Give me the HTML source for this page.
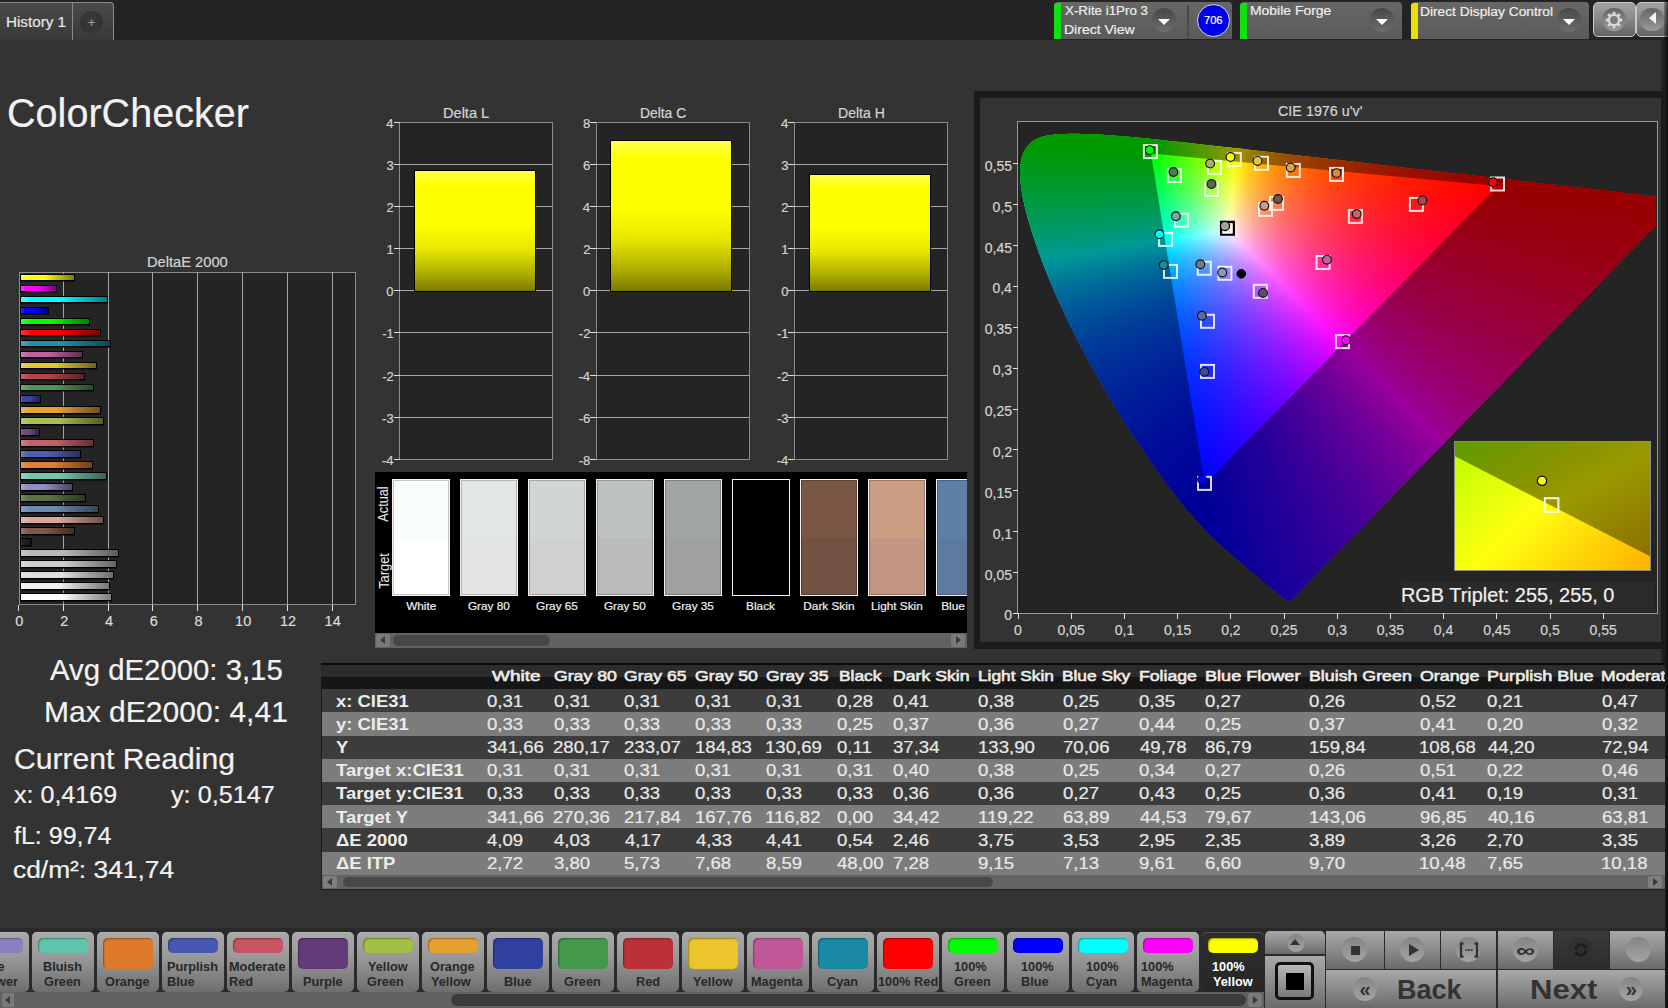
<!DOCTYPE html><html><head><meta charset="utf-8"><style>
html,body{margin:0;padding:0;}
body{width:1668px;height:1008px;overflow:hidden;background:#333333;position:relative;font-family:"Liberation Sans",sans-serif;}
.a{position:absolute;}
.t{position:absolute;white-space:nowrap;line-height:1;transform-origin:0 0;}
</style></head><body>
<div class="a" style="left:0px;top:0px;width:1668px;height:40px;background:#232323;"></div>
<div class="a" style="left:0px;top:2px;width:114px;height:38px;background:linear-gradient(#4a4a4a,#393939);border:1px solid #8a8a8a;border-bottom:none;border-left:none;border-radius:0 4px 0 0;box-sizing:border-box;"></div>
<div class="a" style="left:72px;top:3px;width:1px;height:37px;background:#8a8a8a;"></div>
<div class="t" style="left:5.75px;top:14.63px;font-size:14.5px;color:#e6e6e6;-webkit-text-stroke:0.2px currentColor;transform:scaleX(1.0485);">History 1</div>
<div class="a" style="left:80px;top:11px;width:23px;height:23px;border-radius:50%;background:radial-gradient(circle at 50% 40%,#3a3a3a,#333 60%,#454545);"></div>
<div class="t" style="left:87.71px;top:16.00px;font-size:13px;color:#9a9a9a;-webkit-text-stroke:0.2px currentColor;">+</div>
<div class="a" style="left:1054px;top:2px;width:178px;height:37px;background:linear-gradient(#676767,#5a5a5a);border-radius:4px 4px 0 0;"></div>
<div class="a" style="left:1054px;top:3px;width:7px;height:36px;background:#10e010;border-radius:3px 0 0 0;"></div>
<div class="a" style="left:1240px;top:2px;width:162px;height:37px;background:linear-gradient(#676767,#5a5a5a);border-radius:4px 4px 0 0;"></div>
<div class="a" style="left:1240px;top:3px;width:7px;height:36px;background:#10e010;border-radius:3px 0 0 0;"></div>
<div class="a" style="left:1411px;top:2px;width:178px;height:37px;background:linear-gradient(#676767,#5a5a5a);border-radius:4px 4px 0 0;"></div>
<div class="a" style="left:1411px;top:3px;width:7px;height:36px;background:#e8e000;border-radius:3px 0 0 0;"></div>
<div class="t" style="left:1064.70px;top:5.02px;font-size:12.5px;color:#eeeeee;-webkit-text-stroke:0.2px currentColor;transform:scaleX(1.0654);">X-Rite i1Pro 3</div>
<div class="t" style="left:1063.84px;top:24.22px;font-size:12.5px;color:#eeeeee;-webkit-text-stroke:0.2px currentColor;transform:scaleX(1.1210);">Direct View</div>
<div class="t" style="left:1249.85px;top:5.12px;font-size:12.5px;color:#eeeeee;-webkit-text-stroke:0.2px currentColor;transform:scaleX(1.1152);">Mobile Forge</div>
<div class="t" style="left:1420.16px;top:5.62px;font-size:12.5px;color:#eeeeee;-webkit-text-stroke:0.2px currentColor;transform:scaleX(1.1008);">Direct Display Control</div>
<div class="a" style="left:1187px;top:5px;width:2px;height:34px;background:#4a4a4a;"></div>
<div class="a" style="left:1151.7px;top:8.399999999999999px;width:24px;height:24px;border-radius:50%;background:linear-gradient(#474747,#6e6e6e);"></div>
<div class="a" style="left:1157.7px;top:18.9px;width:0;height:0;border-left:6px solid transparent;border-right:6px solid transparent;border-top:6.5px solid #fff;"></div>
<div class="a" style="left:1370.2px;top:8.3px;width:24px;height:24px;border-radius:50%;background:linear-gradient(#474747,#6e6e6e);"></div>
<div class="a" style="left:1376.2px;top:18.8px;width:0;height:0;border-left:6px solid transparent;border-right:6px solid transparent;border-top:6.5px solid #fff;"></div>
<div class="a" style="left:1556.7px;top:8.3px;width:24px;height:24px;border-radius:50%;background:linear-gradient(#474747,#6e6e6e);"></div>
<div class="a" style="left:1562.7px;top:18.8px;width:0;height:0;border-left:6px solid transparent;border-right:6px solid transparent;border-top:6.5px solid #fff;"></div>
<div class="a" style="left:1197px;top:4px;width:33px;height:33px;border-radius:50%;background:#0000e6;border:1.5px solid #ddd;box-sizing:border-box;"></div>
<div class="t" style="left:1204.19px;top:15.29px;font-size:11px;color:#ffffff;-webkit-text-stroke:0.2px currentColor;transform:scaleX(1.0101);">706</div>
<div class="a" style="left:1593px;top:2px;width:42.5px;height:35px;background:linear-gradient(#a2a2a2,#8a8a8a 45%,#626262);border:1.5px solid #c8c8c8;border-radius:5px;box-sizing:border-box;"></div>
<div class="a" style="left:1602px;top:7.5px;width:23.5px;height:23.5px;border-radius:50%;background:linear-gradient(#646464,#9a9a9a);"></div>
<svg class="a" style="left:1604px;top:9.5px" width="20" height="20" viewBox="-10 -10 20 20"><g fill="#d8d8d8"><rect x="-1.4" y="-8.3" width="2.8" height="4" rx="0.6" transform="rotate(0)"/><rect x="-1.4" y="-8.3" width="2.8" height="4" rx="0.6" transform="rotate(45)"/><rect x="-1.4" y="-8.3" width="2.8" height="4" rx="0.6" transform="rotate(90)"/><rect x="-1.4" y="-8.3" width="2.8" height="4" rx="0.6" transform="rotate(135)"/><rect x="-1.4" y="-8.3" width="2.8" height="4" rx="0.6" transform="rotate(180)"/><rect x="-1.4" y="-8.3" width="2.8" height="4" rx="0.6" transform="rotate(225)"/><rect x="-1.4" y="-8.3" width="2.8" height="4" rx="0.6" transform="rotate(270)"/><rect x="-1.4" y="-8.3" width="2.8" height="4" rx="0.6" transform="rotate(315)"/><circle r="6.2"/></g><circle r="3.9" fill="#7a7a7a"/></svg>
<div class="a" style="left:1636px;top:2px;width:40px;height:35px;background:linear-gradient(#a2a2a2,#8a8a8a 45%,#626262);border:1.5px solid #c8c8c8;border-radius:5px;box-sizing:border-box;"></div>
<div class="a" style="left:1640.4px;top:7.5px;width:23.5px;height:23.5px;border-radius:50%;background:linear-gradient(#646464,#9a9a9a);"></div>
<div class="a" style="left:1649px;top:12.2px;width:0;height:0;border-top:6.3px solid transparent;border-bottom:6.3px solid transparent;border-right:7px solid #f4f4f4;"></div>
<div class="a" style="left:1664px;top:0px;width:4px;height:40px;background:linear-gradient(90deg,rgba(0,0,0,0.2),rgba(0,0,0,0.7));"></div>
<div class="a" style="left:1661px;top:40px;width:4px;height:623px;background:linear-gradient(90deg,#2a2a2a,#1a1a1a);"></div>
<div class="t" style="left:6.62px;top:92.94px;font-size:40px;color:#f2f2f2;-webkit-text-stroke:0.2px currentColor;transform:scaleX(0.9897);">ColorChecker</div>
<div class="t" style="left:146.79px;top:254.54px;font-size:14.6px;color:#d4d4d4;-webkit-text-stroke:0.2px currentColor;transform:scaleX(1.0053);">DeltaE 2000</div>
<div class="a" style="left:18.900000000000002px;top:272px;width:337.4px;height:333px;background:#242424;border:1.5px solid #8c8c8c;box-sizing:border-box;"></div>
<div class="a" style="left:63px;top:272px;width:1px;height:333px;background:#a4a4a4;"></div>
<div class="a" style="left:108px;top:272px;width:1px;height:333px;background:#a4a4a4;"></div>
<div class="a" style="left:152px;top:272px;width:1px;height:333px;background:#a4a4a4;"></div>
<div class="a" style="left:197px;top:272px;width:1px;height:333px;background:#a4a4a4;"></div>
<div class="a" style="left:242px;top:272px;width:1px;height:333px;background:#a4a4a4;"></div>
<div class="a" style="left:287px;top:272px;width:1px;height:333px;background:#a4a4a4;"></div>
<div class="a" style="left:332px;top:272px;width:1px;height:333px;background:#a4a4a4;"></div>
<div class="a" style="left:18px;top:605px;width:1px;height:5.5px;background:#e0e0e0;"></div>
<div class="t" style="left:15.36px;top:613.73px;font-size:14.5px;color:#dcdcdc;-webkit-text-stroke:0.2px currentColor;">0</div>
<div class="a" style="left:63px;top:605px;width:1px;height:5.5px;background:#e0e0e0;"></div>
<div class="t" style="left:60.18px;top:613.73px;font-size:14.5px;color:#dcdcdc;-webkit-text-stroke:0.2px currentColor;">2</div>
<div class="a" style="left:108px;top:605px;width:1px;height:5.5px;background:#e0e0e0;"></div>
<div class="t" style="left:105.01px;top:613.73px;font-size:14.5px;color:#dcdcdc;-webkit-text-stroke:0.2px currentColor;">4</div>
<div class="a" style="left:152px;top:605px;width:1px;height:5.5px;background:#e0e0e0;"></div>
<div class="t" style="left:149.72px;top:613.73px;font-size:14.5px;color:#dcdcdc;-webkit-text-stroke:0.2px currentColor;">6</div>
<div class="a" style="left:197px;top:605px;width:1px;height:5.5px;background:#e0e0e0;"></div>
<div class="t" style="left:194.58px;top:613.73px;font-size:14.5px;color:#dcdcdc;-webkit-text-stroke:0.2px currentColor;">8</div>
<div class="a" style="left:242px;top:605px;width:1px;height:5.5px;background:#e0e0e0;"></div>
<div class="t" style="left:235.08px;top:613.73px;font-size:14.5px;color:#dcdcdc;-webkit-text-stroke:0.2px currentColor;">10</div>
<div class="a" style="left:287px;top:605px;width:1px;height:5.5px;background:#e0e0e0;"></div>
<div class="t" style="left:279.97px;top:613.73px;font-size:14.5px;color:#dcdcdc;-webkit-text-stroke:0.2px currentColor;">12</div>
<div class="a" style="left:332px;top:605px;width:1px;height:5.5px;background:#e0e0e0;"></div>
<div class="t" style="left:324.61px;top:613.73px;font-size:14.5px;color:#dcdcdc;-webkit-text-stroke:0.2px currentColor;">14</div>
<div class="a" style="left:20px;top:273.60px;width:55.08px;height:7.6px;background:linear-gradient(90deg,color-mix(in srgb,#ffff00 80%,#fff) 0%,#ffff00 12%,#ffff00 45%,color-mix(in srgb,#ffff00 50%,#000) 100%);border:1px solid #000;box-sizing:border-box;box-shadow:0 0.8px 0 rgba(0,0,0,0.55);"></div>
<div class="a" style="left:20px;top:284.63px;width:37.16px;height:7.6px;background:linear-gradient(90deg,color-mix(in srgb,#ff00ff 80%,#fff) 0%,#ff00ff 12%,#ff00ff 45%,color-mix(in srgb,#ff00ff 50%,#000) 100%);border:1px solid #000;box-sizing:border-box;box-shadow:0 0.8px 0 rgba(0,0,0,0.55);"></div>
<div class="a" style="left:20px;top:295.66px;width:88.01px;height:7.6px;background:linear-gradient(90deg,color-mix(in srgb,#00ffff 80%,#fff) 0%,#00ffff 12%,#00ffff 45%,color-mix(in srgb,#00ffff 50%,#000) 100%);border:1px solid #000;box-sizing:border-box;box-shadow:0 0.8px 0 rgba(0,0,0,0.55);"></div>
<div class="a" style="left:20px;top:306.69px;width:29.32px;height:7.6px;background:linear-gradient(90deg,color-mix(in srgb,#0000ff 80%,#fff) 0%,#0000ff 12%,#0000ff 45%,color-mix(in srgb,#0000ff 50%,#000) 100%);border:1px solid #000;box-sizing:border-box;box-shadow:0 0.8px 0 rgba(0,0,0,0.55);"></div>
<div class="a" style="left:20px;top:317.72px;width:70.31px;height:7.6px;background:linear-gradient(90deg,color-mix(in srgb,#00ff00 80%,#fff) 0%,#00ff00 12%,#00ff00 45%,color-mix(in srgb,#00ff00 50%,#000) 100%);border:1px solid #000;box-sizing:border-box;box-shadow:0 0.8px 0 rgba(0,0,0,0.55);"></div>
<div class="a" style="left:20px;top:328.75px;width:81.06px;height:7.6px;background:linear-gradient(90deg,color-mix(in srgb,#ff0000 80%,#fff) 0%,#ff0000 12%,#ff0000 45%,color-mix(in srgb,#ff0000 50%,#000) 100%);border:1px solid #000;box-sizing:border-box;box-shadow:0 0.8px 0 rgba(0,0,0,0.55);"></div>
<div class="a" style="left:20px;top:339.78px;width:91.14px;height:7.6px;background:linear-gradient(90deg,color-mix(in srgb,#1f8fae 80%,#fff) 0%,#1f8fae 12%,#1f8fae 45%,color-mix(in srgb,#1f8fae 50%,#000) 100%);border:1px solid #000;box-sizing:border-box;box-shadow:0 0.8px 0 rgba(0,0,0,0.55);"></div>
<div class="a" style="left:20px;top:350.81px;width:62.92px;height:7.6px;background:linear-gradient(90deg,color-mix(in srgb,#c060a0 80%,#fff) 0%,#c060a0 12%,#c060a0 45%,color-mix(in srgb,#c060a0 50%,#000) 100%);border:1px solid #000;box-sizing:border-box;box-shadow:0 0.8px 0 rgba(0,0,0,0.55);"></div>
<div class="a" style="left:20px;top:361.84px;width:76.81px;height:7.6px;background:linear-gradient(90deg,color-mix(in srgb,#e8c82a 80%,#fff) 0%,#e8c82a 12%,#e8c82a 45%,color-mix(in srgb,#e8c82a 50%,#000) 100%);border:1px solid #000;box-sizing:border-box;box-shadow:0 0.8px 0 rgba(0,0,0,0.55);"></div>
<div class="a" style="left:20px;top:372.87px;width:64.94px;height:7.6px;background:linear-gradient(90deg,color-mix(in srgb,#b8404a 80%,#fff) 0%,#b8404a 12%,#b8404a 45%,color-mix(in srgb,#b8404a 50%,#000) 100%);border:1px solid #000;box-sizing:border-box;box-shadow:0 0.8px 0 rgba(0,0,0,0.55);"></div>
<div class="a" style="left:20px;top:383.90px;width:74.12px;height:7.6px;background:linear-gradient(90deg,color-mix(in srgb,#4f9a50 80%,#fff) 0%,#4f9a50 12%,#4f9a50 45%,color-mix(in srgb,#4f9a50 50%,#000) 100%);border:1px solid #000;box-sizing:border-box;box-shadow:0 0.8px 0 rgba(0,0,0,0.55);"></div>
<div class="a" style="left:20px;top:394.93px;width:20.81px;height:7.6px;background:linear-gradient(90deg,color-mix(in srgb,#3a44a0 80%,#fff) 0%,#3a44a0 12%,#3a44a0 45%,color-mix(in srgb,#3a44a0 50%,#000) 100%);border:1px solid #000;box-sizing:border-box;box-shadow:0 0.8px 0 rgba(0,0,0,0.55);"></div>
<div class="a" style="left:20px;top:405.96px;width:81.06px;height:7.6px;background:linear-gradient(90deg,color-mix(in srgb,#e8a038 80%,#fff) 0%,#e8a038 12%,#e8a038 45%,color-mix(in srgb,#e8a038 50%,#000) 100%);border:1px solid #000;box-sizing:border-box;box-shadow:0 0.8px 0 rgba(0,0,0,0.55);"></div>
<div class="a" style="left:20px;top:416.99px;width:83.53px;height:7.6px;background:linear-gradient(90deg,color-mix(in srgb,#a8c050 80%,#fff) 0%,#a8c050 12%,#a8c050 45%,color-mix(in srgb,#a8c050 50%,#000) 100%);border:1px solid #000;box-sizing:border-box;box-shadow:0 0.8px 0 rgba(0,0,0,0.55);"></div>
<div class="a" style="left:20px;top:428.02px;width:19.69px;height:7.6px;background:linear-gradient(90deg,color-mix(in srgb,#6a4a80 80%,#fff) 0%,#6a4a80 12%,#6a4a80 45%,color-mix(in srgb,#6a4a80 50%,#000) 100%);border:1px solid #000;box-sizing:border-box;box-shadow:0 0.8px 0 rgba(0,0,0,0.55);"></div>
<div class="a" style="left:20px;top:439.05px;width:73.90px;height:7.6px;background:linear-gradient(90deg,color-mix(in srgb,#c8606a 80%,#fff) 0%,#c8606a 12%,#c8606a 45%,color-mix(in srgb,#c8606a 50%,#000) 100%);border:1px solid #000;box-sizing:border-box;box-shadow:0 0.8px 0 rgba(0,0,0,0.55);"></div>
<div class="a" style="left:20px;top:450.08px;width:60.68px;height:7.6px;background:linear-gradient(90deg,color-mix(in srgb,#5060b0 80%,#fff) 0%,#5060b0 12%,#5060b0 45%,color-mix(in srgb,#5060b0 50%,#000) 100%);border:1px solid #000;box-sizing:border-box;box-shadow:0 0.8px 0 rgba(0,0,0,0.55);"></div>
<div class="a" style="left:20px;top:461.11px;width:73.22px;height:7.6px;background:linear-gradient(90deg,color-mix(in srgb,#e08030 80%,#fff) 0%,#e08030 12%,#e08030 45%,color-mix(in srgb,#e08030 50%,#000) 100%);border:1px solid #000;box-sizing:border-box;box-shadow:0 0.8px 0 rgba(0,0,0,0.55);"></div>
<div class="a" style="left:20px;top:472.14px;width:87.34px;height:7.6px;background:linear-gradient(90deg,color-mix(in srgb,#70c8b0 80%,#fff) 0%,#70c8b0 12%,#70c8b0 45%,color-mix(in srgb,#70c8b0 50%,#000) 100%);border:1px solid #000;box-sizing:border-box;box-shadow:0 0.8px 0 rgba(0,0,0,0.55);"></div>
<div class="a" style="left:20px;top:483.17px;width:52.84px;height:7.6px;background:linear-gradient(90deg,color-mix(in srgb,#9090c0 80%,#fff) 0%,#9090c0 12%,#9090c0 45%,color-mix(in srgb,#9090c0 50%,#000) 100%);border:1px solid #000;box-sizing:border-box;box-shadow:0 0.8px 0 rgba(0,0,0,0.55);"></div>
<div class="a" style="left:20px;top:494.20px;width:66.28px;height:7.6px;background:linear-gradient(90deg,color-mix(in srgb,#5a7048 80%,#fff) 0%,#5a7048 12%,#5a7048 45%,color-mix(in srgb,#5a7048 50%,#000) 100%);border:1px solid #000;box-sizing:border-box;box-shadow:0 0.8px 0 rgba(0,0,0,0.55);"></div>
<div class="a" style="left:20px;top:505.23px;width:79.27px;height:7.6px;background:linear-gradient(90deg,color-mix(in srgb,#6a88b0 80%,#fff) 0%,#6a88b0 12%,#6a88b0 45%,color-mix(in srgb,#6a88b0 50%,#000) 100%);border:1px solid #000;box-sizing:border-box;box-shadow:0 0.8px 0 rgba(0,0,0,0.55);"></div>
<div class="a" style="left:20px;top:516.26px;width:84.20px;height:7.6px;background:linear-gradient(90deg,color-mix(in srgb,#d8a898 80%,#fff) 0%,#d8a898 12%,#d8a898 45%,color-mix(in srgb,#d8a898 50%,#000) 100%);border:1px solid #000;box-sizing:border-box;box-shadow:0 0.8px 0 rgba(0,0,0,0.55);"></div>
<div class="a" style="left:20px;top:527.29px;width:55.30px;height:7.6px;background:linear-gradient(90deg,color-mix(in srgb,#805848 80%,#fff) 0%,#805848 12%,#805848 45%,color-mix(in srgb,#805848 50%,#000) 100%);border:1px solid #000;box-sizing:border-box;box-shadow:0 0.8px 0 rgba(0,0,0,0.55);"></div>
<div class="a" style="left:20px;top:538.32px;width:12.30px;height:7.6px;background:linear-gradient(90deg,color-mix(in srgb,#202020 80%,#fff) 0%,#202020 12%,#202020 45%,color-mix(in srgb,#202020 50%,#000) 100%);border:1px solid #000;box-sizing:border-box;box-shadow:0 0.8px 0 rgba(0,0,0,0.55);"></div>
<div class="a" style="left:20px;top:549.35px;width:98.98px;height:7.6px;background:linear-gradient(90deg,color-mix(in srgb,#b8b8b8 80%,#fff) 0%,#b8b8b8 12%,#b8b8b8 45%,color-mix(in srgb,#b8b8b8 50%,#000) 100%);border:1px solid #000;box-sizing:border-box;box-shadow:0 0.8px 0 rgba(0,0,0,0.55);"></div>
<div class="a" style="left:20px;top:560.38px;width:97.19px;height:7.6px;background:linear-gradient(90deg,color-mix(in srgb,#cccccc 80%,#fff) 0%,#cccccc 12%,#cccccc 45%,color-mix(in srgb,#cccccc 50%,#000) 100%);border:1px solid #000;box-sizing:border-box;box-shadow:0 0.8px 0 rgba(0,0,0,0.55);"></div>
<div class="a" style="left:20px;top:571.41px;width:93.61px;height:7.6px;background:linear-gradient(90deg,color-mix(in srgb,#dddddd 80%,#fff) 0%,#dddddd 12%,#dddddd 45%,color-mix(in srgb,#dddddd 50%,#000) 100%);border:1px solid #000;box-sizing:border-box;box-shadow:0 0.8px 0 rgba(0,0,0,0.55);"></div>
<div class="a" style="left:20px;top:582.44px;width:90.47px;height:7.6px;background:linear-gradient(90deg,color-mix(in srgb,#eeeeee 80%,#fff) 0%,#eeeeee 12%,#eeeeee 45%,color-mix(in srgb,#eeeeee 50%,#000) 100%);border:1px solid #000;box-sizing:border-box;box-shadow:0 0.8px 0 rgba(0,0,0,0.55);"></div>
<div class="a" style="left:20px;top:593.47px;width:91.82px;height:7.6px;background:linear-gradient(90deg,color-mix(in srgb,#ffffff 80%,#fff) 0%,#ffffff 12%,#ffffff 45%,color-mix(in srgb,#ffffff 50%,#000) 100%);border:1px solid #000;box-sizing:border-box;box-shadow:0 0.8px 0 rgba(0,0,0,0.55);"></div>
<div class="a" style="left:398.90000000000003px;top:121.6px;width:154.00000000000003px;height:338.4px;background:#242424;border:1.5px solid #8c8c8c;box-sizing:border-box;"></div>
<div class="t" style="left:443.25px;top:105.93px;font-size:14.5px;color:#d4d4d4;-webkit-text-stroke:0.2px currentColor;transform:scaleX(1.0054);">Delta L</div>
<div class="a" style="left:393.6px;top:122px;width:6px;height:1px;background:#e0e0e0;"></div>
<div class="t" style="left:386.24px;top:116.80px;font-size:13px;color:#d4d4d4;-webkit-text-stroke:0.2px currentColor;">4</div>
<div class="a" style="left:399.6px;top:164px;width:152.60000000000002px;height:1px;background:#a8a8a8;"></div>
<div class="a" style="left:393.6px;top:164px;width:6px;height:1px;background:#e0e0e0;"></div>
<div class="t" style="left:386.44px;top:158.92px;font-size:13px;color:#d4d4d4;-webkit-text-stroke:0.2px currentColor;">3</div>
<div class="a" style="left:399.6px;top:206px;width:152.60000000000002px;height:1px;background:#a8a8a8;"></div>
<div class="a" style="left:393.6px;top:206px;width:6px;height:1px;background:#e0e0e0;"></div>
<div class="t" style="left:386.54px;top:201.05px;font-size:13px;color:#d4d4d4;-webkit-text-stroke:0.2px currentColor;">2</div>
<div class="a" style="left:399.6px;top:248px;width:152.60000000000002px;height:1px;background:#a8a8a8;"></div>
<div class="a" style="left:393.6px;top:248px;width:6px;height:1px;background:#e0e0e0;"></div>
<div class="t" style="left:386.50px;top:243.17px;font-size:13px;color:#d4d4d4;-webkit-text-stroke:0.2px currentColor;">1</div>
<div class="a" style="left:399.6px;top:290px;width:152.60000000000002px;height:1px;background:#a8a8a8;"></div>
<div class="a" style="left:393.6px;top:290px;width:6px;height:1px;background:#e0e0e0;"></div>
<div class="t" style="left:386.37px;top:285.30px;font-size:13px;color:#d4d4d4;-webkit-text-stroke:0.2px currentColor;">0</div>
<div class="a" style="left:399.6px;top:332px;width:152.60000000000002px;height:1px;background:#a8a8a8;"></div>
<div class="a" style="left:393.6px;top:332px;width:6px;height:1px;background:#e0e0e0;"></div>
<div class="t" style="left:382.18px;top:327.42px;font-size:13px;color:#d4d4d4;-webkit-text-stroke:0.2px currentColor;">-1</div>
<div class="a" style="left:399.6px;top:375px;width:152.60000000000002px;height:1px;background:#a8a8a8;"></div>
<div class="a" style="left:393.6px;top:375px;width:6px;height:1px;background:#e0e0e0;"></div>
<div class="t" style="left:382.21px;top:369.55px;font-size:13px;color:#d4d4d4;-webkit-text-stroke:0.2px currentColor;">-2</div>
<div class="a" style="left:399.6px;top:417px;width:152.60000000000002px;height:1px;background:#a8a8a8;"></div>
<div class="a" style="left:393.6px;top:417px;width:6px;height:1px;background:#e0e0e0;"></div>
<div class="t" style="left:382.12px;top:411.67px;font-size:13px;color:#d4d4d4;-webkit-text-stroke:0.2px currentColor;">-3</div>
<div class="a" style="left:393.6px;top:459px;width:6px;height:1px;background:#e0e0e0;"></div>
<div class="t" style="left:381.92px;top:453.80px;font-size:13px;color:#d4d4d4;-webkit-text-stroke:0.2px currentColor;">-4</div>
<div class="a" style="left:413.80px;top:169.90px;width:121.90px;height:121.90px;background:linear-gradient(#ffff50 0%,#ffff00 12%,#ffff00 45%,#e8e800 65%,#b0b000 85%,#7a7a00 100%);border:1px solid #000;box-sizing:border-box;"></div>
<div class="a" style="left:595.5px;top:121.6px;width:154.09999999999994px;height:338.4px;background:#242424;border:1.5px solid #8c8c8c;box-sizing:border-box;"></div>
<div class="t" style="left:639.96px;top:105.93px;font-size:14.5px;color:#d4d4d4;-webkit-text-stroke:0.2px currentColor;transform:scaleX(0.9546);">Delta C</div>
<div class="a" style="left:590.2px;top:122px;width:6px;height:1px;background:#e0e0e0;"></div>
<div class="t" style="left:583.04px;top:116.80px;font-size:13px;color:#d4d4d4;-webkit-text-stroke:0.2px currentColor;">8</div>
<div class="a" style="left:596.2px;top:164px;width:152.69999999999993px;height:1px;background:#a8a8a8;"></div>
<div class="a" style="left:590.2px;top:164px;width:6px;height:1px;background:#e0e0e0;"></div>
<div class="t" style="left:583.04px;top:158.92px;font-size:13px;color:#d4d4d4;-webkit-text-stroke:0.2px currentColor;">6</div>
<div class="a" style="left:596.2px;top:206px;width:152.69999999999993px;height:1px;background:#a8a8a8;"></div>
<div class="a" style="left:590.2px;top:206px;width:6px;height:1px;background:#e0e0e0;"></div>
<div class="t" style="left:582.84px;top:201.05px;font-size:13px;color:#d4d4d4;-webkit-text-stroke:0.2px currentColor;">4</div>
<div class="a" style="left:596.2px;top:248px;width:152.69999999999993px;height:1px;background:#a8a8a8;"></div>
<div class="a" style="left:590.2px;top:248px;width:6px;height:1px;background:#e0e0e0;"></div>
<div class="t" style="left:583.14px;top:243.17px;font-size:13px;color:#d4d4d4;-webkit-text-stroke:0.2px currentColor;">2</div>
<div class="a" style="left:596.2px;top:290px;width:152.69999999999993px;height:1px;background:#a8a8a8;"></div>
<div class="a" style="left:590.2px;top:290px;width:6px;height:1px;background:#e0e0e0;"></div>
<div class="t" style="left:582.97px;top:285.30px;font-size:13px;color:#d4d4d4;-webkit-text-stroke:0.2px currentColor;">0</div>
<div class="a" style="left:596.2px;top:332px;width:152.69999999999993px;height:1px;background:#a8a8a8;"></div>
<div class="a" style="left:590.2px;top:332px;width:6px;height:1px;background:#e0e0e0;"></div>
<div class="t" style="left:578.81px;top:327.42px;font-size:13px;color:#d4d4d4;-webkit-text-stroke:0.2px currentColor;">-2</div>
<div class="a" style="left:596.2px;top:375px;width:152.69999999999993px;height:1px;background:#a8a8a8;"></div>
<div class="a" style="left:590.2px;top:375px;width:6px;height:1px;background:#e0e0e0;"></div>
<div class="t" style="left:578.52px;top:369.55px;font-size:13px;color:#d4d4d4;-webkit-text-stroke:0.2px currentColor;">-4</div>
<div class="a" style="left:596.2px;top:417px;width:152.69999999999993px;height:1px;background:#a8a8a8;"></div>
<div class="a" style="left:590.2px;top:417px;width:6px;height:1px;background:#e0e0e0;"></div>
<div class="t" style="left:578.72px;top:411.67px;font-size:13px;color:#d4d4d4;-webkit-text-stroke:0.2px currentColor;">-6</div>
<div class="a" style="left:590.2px;top:459px;width:6px;height:1px;background:#e0e0e0;"></div>
<div class="t" style="left:578.72px;top:453.80px;font-size:13px;color:#d4d4d4;-webkit-text-stroke:0.2px currentColor;">-8</div>
<div class="a" style="left:610.40px;top:139.78px;width:122.00px;height:152.02px;background:linear-gradient(#ffff50 0%,#ffff00 12%,#ffff00 45%,#e8e800 65%,#b0b000 85%,#7a7a00 100%);border:1px solid #000;box-sizing:border-box;"></div>
<div class="a" style="left:793.6999999999999px;top:121.6px;width:154.50000000000003px;height:338.4px;background:#242424;border:1.5px solid #8c8c8c;box-sizing:border-box;"></div>
<div class="t" style="left:838.34px;top:105.93px;font-size:14.5px;color:#d4d4d4;-webkit-text-stroke:0.2px currentColor;transform:scaleX(0.9681);">Delta H</div>
<div class="a" style="left:788.4px;top:122px;width:6px;height:1px;background:#e0e0e0;"></div>
<div class="t" style="left:781.04px;top:116.80px;font-size:13px;color:#d4d4d4;-webkit-text-stroke:0.2px currentColor;">4</div>
<div class="a" style="left:794.4px;top:164px;width:153.10000000000002px;height:1px;background:#a8a8a8;"></div>
<div class="a" style="left:788.4px;top:164px;width:6px;height:1px;background:#e0e0e0;"></div>
<div class="t" style="left:781.24px;top:158.92px;font-size:13px;color:#d4d4d4;-webkit-text-stroke:0.2px currentColor;">3</div>
<div class="a" style="left:794.4px;top:206px;width:153.10000000000002px;height:1px;background:#a8a8a8;"></div>
<div class="a" style="left:788.4px;top:206px;width:6px;height:1px;background:#e0e0e0;"></div>
<div class="t" style="left:781.34px;top:201.05px;font-size:13px;color:#d4d4d4;-webkit-text-stroke:0.2px currentColor;">2</div>
<div class="a" style="left:794.4px;top:248px;width:153.10000000000002px;height:1px;background:#a8a8a8;"></div>
<div class="a" style="left:788.4px;top:248px;width:6px;height:1px;background:#e0e0e0;"></div>
<div class="t" style="left:781.30px;top:243.17px;font-size:13px;color:#d4d4d4;-webkit-text-stroke:0.2px currentColor;">1</div>
<div class="a" style="left:794.4px;top:290px;width:153.10000000000002px;height:1px;background:#a8a8a8;"></div>
<div class="a" style="left:788.4px;top:290px;width:6px;height:1px;background:#e0e0e0;"></div>
<div class="t" style="left:781.17px;top:285.30px;font-size:13px;color:#d4d4d4;-webkit-text-stroke:0.2px currentColor;">0</div>
<div class="a" style="left:794.4px;top:332px;width:153.10000000000002px;height:1px;background:#a8a8a8;"></div>
<div class="a" style="left:788.4px;top:332px;width:6px;height:1px;background:#e0e0e0;"></div>
<div class="t" style="left:776.98px;top:327.42px;font-size:13px;color:#d4d4d4;-webkit-text-stroke:0.2px currentColor;">-1</div>
<div class="a" style="left:794.4px;top:375px;width:153.10000000000002px;height:1px;background:#a8a8a8;"></div>
<div class="a" style="left:788.4px;top:375px;width:6px;height:1px;background:#e0e0e0;"></div>
<div class="t" style="left:777.01px;top:369.55px;font-size:13px;color:#d4d4d4;-webkit-text-stroke:0.2px currentColor;">-2</div>
<div class="a" style="left:794.4px;top:417px;width:153.10000000000002px;height:1px;background:#a8a8a8;"></div>
<div class="a" style="left:788.4px;top:417px;width:6px;height:1px;background:#e0e0e0;"></div>
<div class="t" style="left:776.91px;top:411.67px;font-size:13px;color:#d4d4d4;-webkit-text-stroke:0.2px currentColor;">-3</div>
<div class="a" style="left:788.4px;top:459px;width:6px;height:1px;background:#e0e0e0;"></div>
<div class="t" style="left:776.72px;top:453.80px;font-size:13px;color:#d4d4d4;-webkit-text-stroke:0.2px currentColor;">-4</div>
<div class="a" style="left:808.60px;top:173.69px;width:122.40px;height:118.11px;background:linear-gradient(#ffff50 0%,#ffff00 12%,#ffff00 45%,#e8e800 65%,#b0b000 85%,#7a7a00 100%);border:1px solid #000;box-sizing:border-box;"></div>
<div class="a" style="left:375px;top:472px;width:592px;height:161px;background:#000;"></div>
<div class="t" style="left:363.94px;top:497.19px;width:38.91px;height:14px;font-size:14px;color:#ececec;transform-origin:50% 50%;transform:rotate(-90deg) scaleX(0.9093);">Actual</div>
<div class="t" style="left:364.74px;top:563.70px;width:38.91px;height:14px;font-size:14px;color:#ececec;transform-origin:50% 50%;transform:rotate(-90deg) scaleX(0.9169);">Target</div>
<div class="a" style="left:392px;top:479px;width:58px;height:117px;overflow:hidden;"><div style="position:absolute;left:0;top:0;width:58px;height:117px;border:1px solid #f2f2f2;box-shadow:inset 0 0 0 1px rgba(0,0,0,0.22);box-sizing:border-box;background:linear-gradient(#f9fdf9 0,#f9fdf9 50%,#ffffff 50%,#ffffff 100%);"></div></div>
<div class="a" style="left:0;top:0;width:967px;height:1008px;overflow:hidden;"><div class="t" style="left:406.15px;top:600.61px;font-size:11.8px;color:#f0f0f0;-webkit-text-stroke:0.2px currentColor;">White</div></div>
<div class="a" style="left:460px;top:479px;width:58px;height:117px;overflow:hidden;"><div style="position:absolute;left:0;top:0;width:58px;height:117px;border:1px solid #f2f2f2;box-shadow:inset 0 0 0 1px rgba(0,0,0,0.22);box-sizing:border-box;background:linear-gradient(#e3e7e4 0,#e3e7e4 50%,#e4e4e4 50%,#e4e4e4 100%);"></div></div>
<div class="a" style="left:0;top:0;width:967px;height:1008px;overflow:hidden;"><div class="t" style="left:467.95px;top:600.61px;font-size:11.8px;color:#f0f0f0;-webkit-text-stroke:0.2px currentColor;">Gray 80</div></div>
<div class="a" style="left:528px;top:479px;width:58px;height:117px;overflow:hidden;"><div style="position:absolute;left:0;top:0;width:58px;height:117px;border:1px solid #f2f2f2;box-shadow:inset 0 0 0 1px rgba(0,0,0,0.22);box-sizing:border-box;background:linear-gradient(#d0d6d1 0,#d0d6d1 50%,#d1d1d1 50%,#d1d1d1 100%);"></div></div>
<div class="a" style="left:0;top:0;width:967px;height:1008px;overflow:hidden;"><div class="t" style="left:535.97px;top:600.61px;font-size:11.8px;color:#f0f0f0;-webkit-text-stroke:0.2px currentColor;">Gray 65</div></div>
<div class="a" style="left:596px;top:479px;width:58px;height:117px;overflow:hidden;"><div style="position:absolute;left:0;top:0;width:58px;height:117px;border:1px solid #f2f2f2;box-shadow:inset 0 0 0 1px rgba(0,0,0,0.22);box-sizing:border-box;background:linear-gradient(#bdc3be 0,#bdc3be 50%,#bcbcbc 50%,#bcbcbc 100%);"></div></div>
<div class="a" style="left:0;top:0;width:967px;height:1008px;overflow:hidden;"><div class="t" style="left:603.95px;top:600.61px;font-size:11.8px;color:#f0f0f0;-webkit-text-stroke:0.2px currentColor;">Gray 50</div></div>
<div class="a" style="left:664px;top:479px;width:58px;height:117px;overflow:hidden;"><div style="position:absolute;left:0;top:0;width:58px;height:117px;border:1px solid #f2f2f2;box-shadow:inset 0 0 0 1px rgba(0,0,0,0.22);box-sizing:border-box;background:linear-gradient(#a0a5a1 0,#a0a5a1 50%,#a0a0a0 50%,#a0a0a0 100%);"></div></div>
<div class="a" style="left:0;top:0;width:967px;height:1008px;overflow:hidden;"><div class="t" style="left:671.97px;top:600.61px;font-size:11.8px;color:#f0f0f0;-webkit-text-stroke:0.2px currentColor;">Gray 35</div></div>
<div class="a" style="left:732px;top:479px;width:58px;height:117px;overflow:hidden;"><div style="position:absolute;left:0;top:0;width:58px;height:117px;border:1px solid #f2f2f2;box-shadow:inset 0 0 0 1px rgba(0,0,0,0.22);box-sizing:border-box;background:linear-gradient(#000000 0,#000000 50%,#000000 50%,#000000 100%);"></div></div>
<div class="a" style="left:0;top:0;width:967px;height:1008px;overflow:hidden;"><div class="t" style="left:746.09px;top:600.61px;font-size:11.8px;color:#f0f0f0;-webkit-text-stroke:0.2px currentColor;">Black</div></div>
<div class="a" style="left:800px;top:479px;width:58px;height:117px;overflow:hidden;"><div style="position:absolute;left:0;top:0;width:58px;height:117px;border:1px solid #f2f2f2;box-shadow:inset 0 0 0 1px rgba(0,0,0,0.22);box-sizing:border-box;background:linear-gradient(#7a5644 0,#7a5644 50%,#735244 50%,#735244 100%);"></div></div>
<div class="a" style="left:0;top:0;width:967px;height:1008px;overflow:hidden;"><div class="t" style="left:803.32px;top:600.61px;font-size:11.8px;color:#f0f0f0;-webkit-text-stroke:0.2px currentColor;">Dark Skin</div></div>
<div class="a" style="left:868px;top:479px;width:58px;height:117px;overflow:hidden;"><div style="position:absolute;left:0;top:0;width:58px;height:117px;border:1px solid #f2f2f2;box-shadow:inset 0 0 0 1px rgba(0,0,0,0.22);box-sizing:border-box;background:linear-gradient(#cb9d82 0,#cb9d82 50%,#c29682 50%,#c29682 100%);"></div></div>
<div class="a" style="left:0;top:0;width:967px;height:1008px;overflow:hidden;"><div class="t" style="left:870.98px;top:600.61px;font-size:11.8px;color:#f0f0f0;-webkit-text-stroke:0.2px currentColor;">Light Skin</div></div>
<div class="a" style="left:936px;top:479px;width:31px;height:117px;overflow:hidden;"><div style="position:absolute;left:0;top:0;width:58px;height:117px;border:1px solid #f2f2f2;box-shadow:inset 0 0 0 1px rgba(0,0,0,0.22);box-sizing:border-box;background:linear-gradient(#5f80a6 0,#5f80a6 50%,#5e7a9e 50%,#5e7a9e 100%);"></div></div>
<div class="a" style="left:0;top:0;width:967px;height:1008px;overflow:hidden;"><div class="t" style="left:941.24px;top:600.61px;font-size:11.8px;color:#f0f0f0;-webkit-text-stroke:0.2px currentColor;">Blue Sky</div></div>
<div class="a" style="left:375px;top:633px;width:592px;height:15px;background:#626262;"></div>
<div class="a" style="left:376px;top:634px;width:14px;height:13px;background:#7a7a7a;border-radius:2px;"></div>
<div class="a" style="left:380px;top:636px;width:0;height:0;border-top:4.5px solid transparent;border-bottom:4.5px solid transparent;border-right:5px solid #3a3a3a;"></div>
<div class="a" style="left:393px;top:635px;width:157px;height:11px;background:#474747;border-radius:6px;"></div>
<div class="a" style="left:951px;top:634px;width:14px;height:13px;background:#7a7a7a;border-radius:2px;"></div>
<div class="a" style="left:956px;top:636px;width:0;height:0;border-top:4.5px solid transparent;border-bottom:4.5px solid transparent;border-left:5px solid #3a3a3a;"></div>
<div class="a" style="left:974px;top:91px;width:690px;height:558px;background:#1b1b1b;"></div>
<div class="a" style="left:980px;top:98px;width:681px;height:544px;background:#333333;"></div>
<div class="t" style="left:1277.78px;top:104.15px;font-size:14px;color:#d4d4d4;-webkit-text-stroke:0.2px currentColor;transform:scaleX(1.0248);">CIE 1976 u'v'</div>
<div class="a" style="left:1017px;top:121px;width:641px;height:493px;background:#242424;border:1.5px solid #9a9a9a;box-sizing:border-box;"></div>
<div class="a" style="left:1018.5px;top:122.5px;width:637.5px;height:490.0px;overflow:hidden;"><div class="a" style="left:0;top:0;width:637.5px;height:490.0px;clip-path:polygon(272.7px 477.4px,272.6px 477.5px,272.5px 477.6px,272.1px 477.8px,272.0px 477.8px,271.7px 477.8px,271.3px 477.9px,270.9px 477.9px,270.4px 477.8px,269.8px 477.7px,269.1px 477.5px,268.4px 477.2px,267.6px 476.8px,266.8px 476.3px,265.8px 475.7px,264.7px 475.0px,263.6px 474.1px,262.3px 473.1px,260.8px 472.0px,259.2px 470.7px,257.5px 469.2px,255.5px 467.6px,253.4px 465.9px,251.0px 463.9px,248.5px 461.9px,245.8px 459.6px,242.8px 457.2px,239.6px 454.5px,236.0px 451.5px,232.1px 448.3px,228.0px 444.7px,223.5px 441.0px,219.0px 437.0px,214.3px 433.0px,209.7px 429.0px,205.3px 424.9px,200.9px 421.0px,196.8px 417.2px,193.0px 413.5px,189.2px 409.7px,185.6px 406.0px,182.0px 402.1px,178.3px 398.0px,174.5px 393.7px,170.4px 389.0px,166.2px 383.9px,161.7px 378.4px,157.1px 372.6px,152.3px 366.4px,147.4px 360.0px,142.4px 353.2px,137.3px 346.1px,132.0px 338.6px,126.7px 330.9px,121.3px 322.8px,115.7px 314.4px,110.2px 305.8px,104.6px 297.0px,99.0px 287.9px,93.3px 278.6px,87.7px 269.2px,82.1px 259.6px,76.6px 249.9px,71.2px 240.2px,65.9px 230.5px,60.7px 220.8px,55.7px 211.0px,50.9px 201.4px,46.3px 191.8px,42.0px 182.4px,37.8px 173.2px,33.9px 164.2px,30.2px 155.3px,26.8px 146.7px,23.5px 138.3px,20.5px 130.3px,17.8px 122.6px,15.3px 115.2px,13.0px 108.1px,10.9px 101.3px,9.1px 94.9px,7.4px 88.8px,6.0px 83.1px,4.8px 77.7px,3.8px 72.5px,3.0px 67.7px,2.4px 63.2px,1.9px 58.9px,1.6px 54.9px,1.5px 51.1px,1.5px 47.6px,1.7px 44.3px,2.1px 41.2px,2.6px 38.2px,3.2px 35.5px,4.0px 32.9px,4.9px 30.6px,5.9px 28.4px,7.1px 26.3px,8.4px 24.5px,9.8px 22.7px,11.3px 21.2px,12.9px 19.8px,14.6px 18.5px,16.4px 17.4px,18.2px 16.4px,20.2px 15.5px,22.2px 14.8px,24.3px 14.1px,26.4px 13.6px,28.6px 13.1px,30.9px 12.7px,33.2px 12.4px,35.5px 12.1px,37.9px 11.9px,40.3px 11.7px,42.8px 11.6px,45.3px 11.5px,47.7px 11.4px,50.2px 11.3px,52.8px 11.3px,55.3px 11.3px,57.8px 11.3px,60.3px 11.3px,62.9px 11.4px,65.4px 11.4px,68.0px 11.5px,70.6px 11.6px,73.2px 11.7px,75.8px 11.8px,78.5px 11.9px,81.2px 12.1px,83.9px 12.2px,86.7px 12.4px,89.5px 12.6px,92.3px 12.8px,95.2px 13.0px,98.1px 13.2px,101.0px 13.5px,104.0px 13.7px,107.0px 14.0px,110.1px 14.3px,113.2px 14.5px,116.4px 14.8px,119.6px 15.1px,122.8px 15.5px,126.2px 15.8px,129.5px 16.1px,133.0px 16.5px,136.5px 16.8px,140.0px 17.2px,143.6px 17.6px,147.3px 18.0px,151.0px 18.4px,154.8px 18.8px,158.7px 19.2px,162.6px 19.6px,166.6px 20.1px,170.7px 20.5px,174.8px 21.0px,179.0px 21.4px,183.3px 21.9px,187.6px 22.4px,192.1px 22.9px,196.6px 23.4px,201.1px 23.9px,205.8px 24.4px,210.5px 25.0px,215.3px 25.5px,220.2px 26.1px,225.1px 26.6px,230.2px 27.2px,235.3px 27.8px,240.5px 28.4px,245.7px 29.0px,251.1px 29.6px,256.5px 30.2px,262.0px 30.9px,267.5px 31.5px,273.2px 32.2px,278.9px 32.8px,284.7px 33.5px,290.5px 34.2px,296.4px 34.8px,302.4px 35.5px,308.5px 36.2px,314.6px 36.9px,320.8px 37.6px,327.0px 38.3px,333.3px 39.1px,339.6px 39.8px,346.0px 40.5px,352.4px 41.2px,358.8px 42.0px,365.2px 42.7px,371.7px 43.5px,378.1px 44.2px,384.5px 45.0px,391.0px 45.7px,397.3px 46.4px,403.7px 47.2px,410.0px 47.9px,416.3px 48.6px,422.5px 49.3px,428.8px 50.0px,435.0px 50.7px,441.1px 51.5px,447.2px 52.1px,453.1px 52.8px,458.9px 53.5px,464.6px 54.1px,470.2px 54.8px,475.9px 55.4px,481.8px 56.1px,488.1px 56.8px,494.8px 57.6px,501.9px 58.4px,509.5px 59.3px,517.6px 60.2px,525.8px 61.2px,534.2px 62.1px,542.6px 63.1px,550.7px 64.0px,558.5px 64.9px,565.9px 65.8px,572.7px 66.6px,579.1px 67.3px,585.1px 68.0px,590.8px 68.6px,596.1px 69.2px,601.2px 69.8px,606.1px 70.4px,610.6px 70.9px,614.9px 71.4px,618.9px 71.9px,622.7px 72.3px,626.2px 72.7px,629.4px 73.1px,632.4px 73.4px,635.1px 73.7px,637.6px 74.0px,640.0px 74.3px,642.1px 74.5px,644.1px 74.7px,646.0px 75.0px,647.8px 75.2px,649.6px 75.4px,651.2px 75.6px,652.9px 75.7px,654.4px 75.9px,655.8px 76.1px,657.2px 76.2px,658.4px 76.4px,659.4px 76.5px,660.3px 76.6px,660.8px 76.7px,662.0px 76.8px,662.5px 76.9px,662.8px 76.9px);isolation:isolate;"><div class="a" style="left:0;top:0;width:700px;height:500px;background:conic-gradient(from 5.4deg at 210.0px 108.1px,#ffff00 0deg,#ff0000 75.2deg,#ff00ff 129.4deg,#0000ff 180.0deg,#00ffff 255.2deg,#00ff00 309.5deg,#ffff00 360deg);"></div><div class="a" style="left:0;top:0;width:637.5px;height:490.0px;background:conic-gradient(from 4.00deg at 186.18px 361.89px,rgb(0,255,0) 0deg,rgb(0,255,0) 1deg,rgb(0,241,0) 2deg,rgb(0,222,0) 3deg,rgb(0,204,0) 4deg,rgb(0,189,0) 5deg,rgb(0,175,0) 6deg,rgb(0,162,0) 7deg,rgb(0,151,0) 8deg,rgb(0,141,0) 9deg,rgb(0,131,0) 10deg,rgb(0,122,0) 11deg,rgb(0,114,0) 12deg,rgb(0,106,0) 13deg,rgb(0,99,0) 14deg,rgb(0,93,0) 15deg,rgb(0,86,0) 16deg,rgb(0,81,0) 17deg,rgb(0,75,0) 18deg,rgb(0,70,0) 19deg,rgb(0,65,0) 20deg,rgb(0,60,0) 21deg,rgb(0,56,0) 22deg,rgb(0,52,0) 23deg,rgb(0,48,0) 24deg,rgb(0,44,0) 25deg,rgb(0,40,0) 26deg,rgb(0,37,0) 27deg,rgb(0,33,0) 28deg,rgb(0,30,0) 29deg,rgb(0,27,0) 30deg,rgb(0,24,0) 31deg,rgb(0,21,0) 32deg,rgb(0,18,0) 33deg,rgb(0,16,0) 34deg,rgb(0,13,0) 35deg,rgb(0,10,0) 36deg,rgb(0,8,0) 37deg,rgb(0,6,0) 38deg,rgb(0,3,0) 39deg,rgb(0,1,0) 40deg,rgb(0,0,0) 41deg,rgb(0,0,0) 42deg,rgb(0,0,0) 43deg,rgb(0,0,0) 44deg,rgb(0,0,0) 45deg,rgb(0,0,0) 46deg,rgb(0,0,0) 47deg,rgb(0,0,0) 48deg,rgb(0,0,0) 49deg,rgb(0,0,0) 50deg,rgb(0,0,0) 51deg,rgb(0,0,0) 52deg,rgb(0,0,0) 53deg,rgb(0,0,0) 54deg,rgb(0,0,0) 55deg,rgb(0,0,0) 56deg,rgb(0,0,0) 57deg,rgb(0,0,0) 58deg,rgb(0,0,0) 59deg,rgb(0,0,0) 60deg,rgb(0,0,0) 61deg,rgb(0,0,0) 62deg,rgb(0,0,0) 63deg,rgb(0,0,0) 64deg,rgb(0,0,0) 65deg,rgb(0,0,0) 66deg,rgb(0,0,0) 67deg,rgb(0,0,0) 68deg,rgb(0,0,0) 69deg,rgb(0,0,0) 70deg,rgb(0,0,0) 71deg,rgb(0,0,0) 72deg,rgb(0,0,0) 73deg,rgb(0,0,0) 74deg,rgb(0,0,0) 75deg,rgb(0,0,0) 76deg,rgb(0,0,0) 77deg,rgb(0,0,0) 78deg,rgb(0,0,0) 79deg,rgb(0,0,0) 80deg,rgb(0,0,0) 81deg,rgb(0,0,0) 82deg,rgb(0,0,0) 83deg,rgb(0,0,0) 84deg,rgb(0,0,0) 85deg,rgb(0,0,0) 86deg,rgb(0,0,0) 87deg,rgb(0,0,0) 88deg,rgb(0,0,0) 89deg,rgb(0,0,0) 90deg,rgb(0,0,0) 91deg,rgb(0,0,0) 92deg,rgb(0,0,0) 93deg,rgb(0,0,0) 94deg,rgb(0,0,0) 95deg,rgb(0,0,0) 96deg,rgb(0,0,0) 97deg,rgb(0,0,0) 98deg,rgb(0,0,0) 99deg,rgb(0,0,0) 100deg,rgb(0,0,0) 101deg,rgb(0,0,0) 102deg,rgb(0,0,0) 103deg,rgb(0,0,0) 104deg,rgb(0,0,0) 105deg,rgb(0,0,0) 105.01deg),conic-gradient(from 68.00deg at 132.50px 31.10px,rgb(0,0,0) 0deg,rgb(0,0,0) 1deg,rgb(0,0,0) 2deg,rgb(0,0,0) 3deg,rgb(0,0,0) 4deg,rgb(0,0,0) 5deg,rgb(0,0,0) 6deg,rgb(0,0,0) 7deg,rgb(0,0,0) 8deg,rgb(0,0,0) 9deg,rgb(0,0,0) 10deg,rgb(0,0,0) 11deg,rgb(0,0,0) 12deg,rgb(0,0,0) 13deg,rgb(0,0,0) 14deg,rgb(0,0,0) 15deg,rgb(0,0,0) 16deg,rgb(0,0,0) 17deg,rgb(0,0,0) 18deg,rgb(0,0,0) 19deg,rgb(0,0,0) 20deg,rgb(0,0,0) 21deg,rgb(0,0,0) 22deg,rgb(0,0,0) 23deg,rgb(0,0,0) 24deg,rgb(0,0,0) 25deg,rgb(0,0,0) 26deg,rgb(0,0,0) 27deg,rgb(0,0,3) 28deg,rgb(0,0,7) 29deg,rgb(0,0,11) 30deg,rgb(0,0,16) 31deg,rgb(0,0,20) 32deg,rgb(0,0,25) 33deg,rgb(0,0,29) 34deg,rgb(0,0,34) 35deg,rgb(0,0,39) 36deg,rgb(0,0,43) 37deg,rgb(0,0,48) 38deg,rgb(0,0,53) 39deg,rgb(0,0,58) 40deg,rgb(0,0,63) 41deg,rgb(0,0,68) 42deg,rgb(0,0,74) 43deg,rgb(0,0,79) 44deg,rgb(0,0,84) 45deg,rgb(0,0,90) 46deg,rgb(0,0,96) 47deg,rgb(0,0,102) 48deg,rgb(0,0,108) 49deg,rgb(0,0,114) 50deg,rgb(0,0,120) 51deg,rgb(0,0,127) 52deg,rgb(0,0,134) 53deg,rgb(0,0,141) 54deg,rgb(0,0,148) 55deg,rgb(0,0,155) 56deg,rgb(0,0,163) 57deg,rgb(0,0,171) 58deg,rgb(0,0,179) 59deg,rgb(0,0,187) 60deg,rgb(0,0,196) 61deg,rgb(0,0,205) 62deg,rgb(0,0,215) 63deg,rgb(0,0,225) 64deg,rgb(0,0,235) 65deg,rgb(0,0,246) 66deg,rgb(0,0,255) 67deg,rgb(0,0,255) 68deg,rgb(0,0,255) 69deg,rgb(0,0,0) 69.01deg),#ff0000;background-blend-mode:screen;clip-path:polygon(210.0px 108.1px,219.7px -2.0px,639.5px -2.0px,639.5px 492.0px,591.7px 492.0px);"></div><div class="a" style="left:0;top:0;width:637.5px;height:490.0px;background:conic-gradient(from 318.00deg at 186.18px 361.89px,rgb(0,0,0) 0deg,rgb(0,0,0) 1deg,rgb(0,0,0) 2deg,rgb(0,0,0) 3deg,rgb(0,0,0) 4deg,rgb(0,0,0) 5deg,rgb(0,0,0) 6deg,rgb(0,0,0) 7deg,rgb(0,0,0) 8deg,rgb(0,0,0) 9deg,rgb(0,0,0) 10deg,rgb(0,0,0) 11deg,rgb(0,0,0) 12deg,rgb(0,0,0) 13deg,rgb(0,0,0) 14deg,rgb(0,0,0) 15deg,rgb(0,0,0) 16deg,rgb(0,0,0) 17deg,rgb(0,0,0) 18deg,rgb(0,0,0) 19deg,rgb(0,0,0) 20deg,rgb(0,0,0) 21deg,rgb(0,0,0) 22deg,rgb(0,0,0) 23deg,rgb(0,0,0) 24deg,rgb(0,0,0) 25deg,rgb(0,0,0) 26deg,rgb(0,0,0) 27deg,rgb(0,0,0) 28deg,rgb(0,0,0) 29deg,rgb(0,0,0) 30deg,rgb(0,0,0) 31deg,rgb(0,0,0) 32deg,rgb(3,0,0) 33deg,rgb(17,0,0) 34deg,rgb(32,0,0) 35deg,rgb(46,0,0) 36deg,rgb(62,0,0) 37deg,rgb(78,0,0) 38deg,rgb(94,0,0) 39deg,rgb(111,0,0) 40deg,rgb(128,0,0) 41deg,rgb(146,0,0) 42deg,rgb(165,0,0) 43deg,rgb(184,0,0) 44deg,rgb(204,0,0) 45deg,rgb(225,0,0) 46deg,rgb(247,0,0) 47deg,rgb(255,0,0) 48deg,rgb(255,0,0) 49deg,rgb(0,0,0) 49.01deg),conic-gradient(from 259.00deg at 479.17px 63.49px,rgb(0,0,255) 0deg,rgb(0,0,255) 1deg,rgb(0,0,246) 2deg,rgb(0,0,224) 3deg,rgb(0,0,203) 4deg,rgb(0,0,182) 5deg,rgb(0,0,163) 6deg,rgb(0,0,144) 7deg,rgb(0,0,127) 8deg,rgb(0,0,109) 9deg,rgb(0,0,93) 10deg,rgb(0,0,77) 11deg,rgb(0,0,62) 12deg,rgb(0,0,47) 13deg,rgb(0,0,32) 14deg,rgb(0,0,18) 15deg,rgb(0,0,5) 16deg,rgb(0,0,0) 17deg,rgb(0,0,0) 18deg,rgb(0,0,0) 19deg,rgb(0,0,0) 20deg,rgb(0,0,0) 21deg,rgb(0,0,0) 22deg,rgb(0,0,0) 23deg,rgb(0,0,0) 24deg,rgb(0,0,0) 25deg,rgb(0,0,0) 26deg,rgb(0,0,0) 27deg,rgb(0,0,0) 27.01deg),#00ff00;background-blend-mode:screen;clip-path:polygon(210.0px 108.1px,-2.0px 144.6px,-2.0px -2.0px,221.0px -2.0px);"></div><div class="a" style="left:0;top:0;width:637.5px;height:490.0px;background:conic-gradient(from 133.00deg at 132.50px 31.10px,rgb(255,0,0) 0deg,rgb(255,0,0) 1deg,rgb(253,0,0) 2deg,rgb(242,0,0) 3deg,rgb(231,0,0) 4deg,rgb(221,0,0) 5deg,rgb(211,0,0) 6deg,rgb(201,0,0) 7deg,rgb(192,0,0) 8deg,rgb(183,0,0) 9deg,rgb(174,0,0) 10deg,rgb(166,0,0) 11deg,rgb(158,0,0) 12deg,rgb(150,0,0) 13deg,rgb(142,0,0) 14deg,rgb(134,0,0) 15deg,rgb(127,0,0) 16deg,rgb(120,0,0) 17deg,rgb(113,0,0) 18deg,rgb(106,0,0) 19deg,rgb(100,0,0) 20deg,rgb(93,0,0) 21deg,rgb(87,0,0) 22deg,rgb(81,0,0) 23deg,rgb(75,0,0) 24deg,rgb(69,0,0) 25deg,rgb(63,0,0) 26deg,rgb(57,0,0) 27deg,rgb(51,0,0) 28deg,rgb(46,0,0) 29deg,rgb(40,0,0) 30deg,rgb(35,0,0) 31deg,rgb(30,0,0) 32deg,rgb(24,0,0) 33deg,rgb(19,0,0) 34deg,rgb(14,0,0) 35deg,rgb(9,0,0) 36deg,rgb(4,0,0) 37deg,rgb(0,0,0) 38deg,rgb(0,0,0) 39deg,rgb(0,0,0) 40deg,rgb(0,0,0) 41deg,rgb(0,0,0) 42deg,rgb(0,0,0) 43deg,rgb(0,0,0) 44deg,rgb(0,0,0) 45deg,rgb(0,0,0) 46deg,rgb(0,0,0) 47deg,rgb(0,0,0) 48deg,rgb(0,0,0) 49deg,rgb(0,0,0) 50deg,rgb(0,0,0) 51deg,rgb(0,0,0) 52deg,rgb(0,0,0) 53deg,rgb(0,0,0) 54deg,rgb(0,0,0) 55deg,rgb(0,0,0) 56deg,rgb(0,0,0) 57deg,rgb(0,0,0) 58deg,rgb(0,0,0) 59deg,rgb(0,0,0) 60deg,rgb(0,0,0) 61deg,rgb(0,0,0) 62deg,rgb(0,0,0) 63deg,rgb(0,0,0) 64deg,rgb(0,0,0) 65deg,rgb(0,0,0) 66deg,rgb(0,0,0) 67deg,rgb(0,0,0) 68deg,rgb(0,0,0) 69deg,rgb(0,0,0) 70deg,rgb(0,0,0) 71deg,rgb(0,0,0) 72deg,rgb(0,0,0) 73deg,rgb(0,0,0) 74deg,rgb(0,0,0) 75deg,rgb(0,0,0) 76deg,rgb(0,0,0) 77deg,rgb(0,0,0) 78deg,rgb(0,0,0) 79deg,rgb(0,0,0) 80deg,rgb(0,0,0) 81deg,rgb(0,0,0) 82deg,rgb(0,0,0) 83deg,rgb(0,0,0) 84deg,rgb(0,0,0) 85deg,rgb(0,0,0) 86deg,rgb(0,0,0) 87deg,rgb(0,0,0) 88deg,rgb(0,0,0) 89deg,rgb(0,0,0) 90deg,rgb(0,0,0) 91deg,rgb(0,0,0) 92deg,rgb(0,0,0) 93deg,rgb(0,0,0) 94deg,rgb(0,0,0) 95deg,rgb(0,0,0) 96deg,rgb(0,0,0) 97deg,rgb(0,0,0) 98deg,rgb(0,0,0) 99deg,rgb(0,0,0) 99.01deg),conic-gradient(from 163.00deg at 479.17px 63.49px,rgb(0,0,0) 0deg,rgb(0,0,0) 1deg,rgb(0,0,0) 2deg,rgb(0,0,0) 3deg,rgb(0,0,0) 4deg,rgb(0,0,0) 5deg,rgb(0,0,0) 6deg,rgb(0,0,0) 7deg,rgb(0,0,0) 8deg,rgb(0,0,0) 9deg,rgb(0,0,0) 10deg,rgb(0,0,0) 11deg,rgb(0,0,0) 12deg,rgb(0,0,0) 13deg,rgb(0,0,0) 14deg,rgb(0,0,0) 15deg,rgb(0,0,0) 16deg,rgb(0,0,0) 17deg,rgb(0,0,0) 18deg,rgb(0,0,0) 19deg,rgb(0,0,0) 20deg,rgb(0,0,0) 21deg,rgb(0,0,0) 22deg,rgb(0,0,0) 23deg,rgb(0,0,0) 24deg,rgb(0,0,0) 25deg,rgb(0,0,0) 26deg,rgb(0,0,0) 27deg,rgb(0,0,0) 28deg,rgb(0,0,0) 29deg,rgb(0,0,0) 30deg,rgb(0,0,0) 31deg,rgb(0,0,0) 32deg,rgb(0,0,0) 33deg,rgb(0,0,0) 34deg,rgb(0,0,0) 35deg,rgb(0,0,0) 36deg,rgb(0,0,0) 37deg,rgb(0,0,0) 38deg,rgb(0,0,0) 39deg,rgb(0,0,0) 40deg,rgb(0,0,0) 41deg,rgb(0,0,0) 42deg,rgb(0,0,0) 43deg,rgb(0,0,0) 44deg,rgb(0,0,0) 45deg,rgb(0,0,0) 46deg,rgb(0,0,0) 47deg,rgb(0,0,0) 48deg,rgb(0,0,0) 49deg,rgb(0,0,0) 50deg,rgb(0,0,0) 51deg,rgb(0,0,0) 52deg,rgb(0,0,0) 53deg,rgb(0,0,0) 54deg,rgb(0,0,0) 55deg,rgb(0,0,0) 56deg,rgb(0,0,0) 57deg,rgb(0,0,0) 58deg,rgb(0,0,0) 59deg,rgb(0,0,0) 60deg,rgb(0,0,0) 61deg,rgb(0,1,0) 62deg,rgb(0,4,0) 63deg,rgb(0,6,0) 64deg,rgb(0,9,0) 65deg,rgb(0,12,0) 66deg,rgb(0,15,0) 67deg,rgb(0,18,0) 68deg,rgb(0,21,0) 69deg,rgb(0,24,0) 70deg,rgb(0,28,0) 71deg,rgb(0,31,0) 72deg,rgb(0,35,0) 73deg,rgb(0,39,0) 74deg,rgb(0,42,0) 75deg,rgb(0,47,0) 76deg,rgb(0,51,0) 77deg,rgb(0,56,0) 78deg,rgb(0,60,0) 79deg,rgb(0,65,0) 80deg,rgb(0,71,0) 81deg,rgb(0,76,0) 82deg,rgb(0,82,0) 83deg,rgb(0,89,0) 84deg,rgb(0,96,0) 85deg,rgb(0,103,0) 86deg,rgb(0,111,0) 87deg,rgb(0,119,0) 88deg,rgb(0,128,0) 89deg,rgb(0,138,0) 90deg,rgb(0,149,0) 91deg,rgb(0,161,0) 92deg,rgb(0,174,0) 93deg,rgb(0,188,0) 94deg,rgb(0,204,0) 95deg,rgb(0,222,0) 96deg,rgb(0,242,0) 97deg,rgb(0,255,0) 98deg,rgb(0,255,0) 99deg,rgb(0,0,0) 99.01deg),#0000ff;background-blend-mode:screen;clip-path:polygon(210.0px 108.1px,601.2px 492.0px,-2.0px 492.0px,-2.0px 141.9px);"></div></div></div>
<svg class="a" style="left:0;top:0" width="1668" height="1008"><defs><clipPath id="plotclip"><rect x="1018.5" y="122.5" width="637.5" height="490.0"/></clipPath></defs><g clip-path="url(#plotclip)"><path d="M1291.2,599.9 L1291.1,600.0 L1291.0,600.1 L1290.6,600.3 L1290.5,600.3 L1290.2,600.3 L1289.8,600.4 L1289.4,600.4 L1288.9,600.3 L1288.3,600.2 L1287.6,600.0 L1286.9,599.7 L1286.1,599.3 L1285.3,598.8 L1284.3,598.2 L1283.2,597.5 L1282.1,596.6 L1280.8,595.6 L1279.3,594.5 L1277.7,593.2 L1276.0,591.7 L1274.0,590.1 L1271.9,588.4 L1269.5,586.4 L1267.0,584.4 L1264.3,582.1 L1261.3,579.7 L1258.1,577.0 L1254.5,574.0 L1250.6,570.8 L1246.5,567.2 L1242.0,563.5 L1237.5,559.5 L1232.8,555.5 L1228.2,551.5 L1223.8,547.4 L1219.4,543.5 L1215.3,539.7 L1211.5,536.0 L1207.7,532.2 L1204.1,528.5 L1200.5,524.6 L1196.8,520.5 L1193.0,516.2 L1188.9,511.5 L1184.7,506.4 L1180.2,500.9 L1175.6,495.1 L1170.8,488.9 L1165.9,482.5 L1160.9,475.7 L1155.8,468.6 L1150.5,461.1 L1145.2,453.4 L1139.8,445.3 L1134.2,436.9 L1128.7,428.3 L1123.1,419.5 L1117.5,410.4 L1111.8,401.1 L1106.2,391.7 L1100.6,382.1 L1095.1,372.4 L1089.7,362.7 L1084.4,353.0 L1079.2,343.3 L1074.2,333.5 L1069.4,323.9 L1064.8,314.3 L1060.5,304.9 L1056.3,295.7 L1052.4,286.7 L1048.7,277.8 L1045.3,269.2 L1042.0,260.8 L1039.0,252.8 L1036.3,245.1 L1033.8,237.7 L1031.5,230.6 L1029.4,223.8 L1027.6,217.4 L1025.9,211.3 L1024.5,205.6 L1023.3,200.2 L1022.3,195.0 L1021.5,190.2 L1020.9,185.7 L1020.4,181.4 L1020.1,177.4 L1020.0,173.6 L1020.0,170.1 L1020.2,166.8 L1020.6,163.7 L1021.1,160.7 L1021.7,158.0 L1022.5,155.4 L1023.4,153.1 L1024.4,150.9 L1025.6,148.8 L1026.9,147.0 L1028.3,145.2 L1029.8,143.7 L1031.4,142.3 L1033.1,141.0 L1034.9,139.9 L1036.7,138.9 L1038.7,138.0 L1040.7,137.3 L1042.8,136.6 L1044.9,136.1 L1047.1,135.6 L1049.4,135.2 L1051.7,134.9 L1054.0,134.6 L1056.4,134.4 L1058.8,134.2 L1061.3,134.1 L1063.8,134.0 L1066.2,133.9 L1068.7,133.8 L1071.3,133.8 L1073.8,133.8 L1076.3,133.8 L1078.8,133.8 L1081.4,133.9 L1083.9,133.9 L1086.5,134.0 L1089.1,134.1 L1091.7,134.2 L1094.3,134.3 L1097.0,134.4 L1099.7,134.6 L1102.4,134.7 L1105.2,134.9 L1108.0,135.1 L1110.8,135.3 L1113.7,135.5 L1116.6,135.7 L1119.5,136.0 L1122.5,136.2 L1125.5,136.5 L1128.6,136.8 L1131.7,137.0 L1134.9,137.3 L1138.1,137.6 L1141.3,138.0 L1144.7,138.3 L1148.0,138.6 L1151.5,139.0 L1155.0,139.3 L1158.5,139.7 L1162.1,140.1 L1165.8,140.5 L1169.5,140.9 L1173.3,141.3 L1177.2,141.7 L1181.1,142.1 L1185.1,142.6 L1189.2,143.0 L1193.3,143.5 L1197.5,143.9 L1201.8,144.4 L1206.1,144.9 L1210.6,145.4 L1215.1,145.9 L1219.6,146.4 L1224.3,146.9 L1229.0,147.5 L1233.8,148.0 L1238.7,148.6 L1243.6,149.1 L1248.7,149.7 L1253.8,150.3 L1259.0,150.9 L1264.2,151.5 L1269.6,152.1 L1275.0,152.7 L1280.5,153.4 L1286.0,154.0 L1291.7,154.7 L1297.4,155.3 L1303.2,156.0 L1309.0,156.7 L1314.9,157.3 L1320.9,158.0 L1327.0,158.7 L1333.1,159.4 L1339.3,160.1 L1345.5,160.8 L1351.8,161.6 L1358.1,162.3 L1364.5,163.0 L1370.9,163.7 L1377.3,164.5 L1383.7,165.2 L1390.2,166.0 L1396.6,166.7 L1403.0,167.5 L1409.5,168.2 L1415.8,168.9 L1422.2,169.7 L1428.5,170.4 L1434.8,171.1 L1441.0,171.8 L1447.3,172.5 L1453.5,173.2 L1459.6,174.0 L1465.7,174.6 L1471.6,175.3 L1477.4,176.0 L1483.1,176.6 L1488.7,177.3 L1494.4,177.9 L1500.3,178.6 L1506.6,179.3 L1513.3,180.1 L1520.4,180.9 L1528.0,181.8 L1536.1,182.7 L1544.3,183.7 L1552.7,184.6 L1561.1,185.6 L1569.2,186.5 L1577.0,187.4 L1584.4,188.3 L1591.2,189.1 L1597.6,189.8 L1603.6,190.5 L1609.3,191.1 L1614.6,191.7 L1619.7,192.3 L1624.6,192.9 L1629.1,193.4 L1633.4,193.9 L1637.4,194.4 L1641.2,194.8 L1644.7,195.2 L1647.9,195.6 L1650.9,195.9 L1653.6,196.2 L1656.1,196.5 L1658.5,196.8 L1660.6,197.0 L1662.6,197.2 L1664.5,197.5 L1666.3,197.7 L1668.1,197.9 L1669.7,198.1 L1671.4,198.2 L1672.9,198.4 L1674.3,198.6 L1675.7,198.7 L1676.9,198.9 L1677.9,199.0 L1678.8,199.1 L1679.3,199.2 L1680.5,199.3 L1681.0,199.4 L1681.3,199.4 Z M1497.7,186.0 L1151.0,153.6 L1204.7,484.4 Z" fill="#000" fill-opacity="0.4" fill-rule="evenodd"/></g><rect x="1143.9" y="145.1" width="13" height="13" fill="none" stroke="#fff" stroke-opacity="0.85" stroke-width="2"/><rect x="1167.9" y="169.1" width="13" height="13" fill="none" stroke="#fff" stroke-opacity="0.85" stroke-width="2"/><rect x="1208.0" y="160.9" width="13" height="13" fill="none" stroke="#fff" stroke-opacity="0.85" stroke-width="2"/><rect x="1227.8" y="152.9" width="13" height="13" fill="none" stroke="#fff" stroke-opacity="0.85" stroke-width="2"/><rect x="1255.0" y="156.8" width="13" height="13" fill="none" stroke="#fff" stroke-opacity="0.85" stroke-width="2"/><rect x="1286.8" y="163.9" width="13" height="13" fill="none" stroke="#fff" stroke-opacity="0.85" stroke-width="2"/><rect x="1205.0" y="182.9" width="13" height="13" fill="none" stroke="#fff" stroke-opacity="0.85" stroke-width="2"/><rect x="1270.0" y="196.9" width="13" height="13" fill="none" stroke="#fff" stroke-opacity="0.85" stroke-width="2"/><rect x="1259.0" y="202.9" width="13" height="13" fill="none" stroke="#fff" stroke-opacity="0.85" stroke-width="2"/><rect x="1175.1" y="213.7" width="13" height="13" fill="none" stroke="#fff" stroke-opacity="0.85" stroke-width="2"/><rect x="1159.1" y="232.9" width="13" height="13" fill="none" stroke="#fff" stroke-opacity="0.85" stroke-width="2"/><rect x="1330.0" y="167.9" width="13" height="13" fill="none" stroke="#fff" stroke-opacity="0.85" stroke-width="2"/><rect x="1491.0" y="177.5" width="13" height="13" fill="none" stroke="#fff" stroke-opacity="0.85" stroke-width="2"/><rect x="1409.9" y="197.9" width="13" height="13" fill="none" stroke="#fff" stroke-opacity="0.85" stroke-width="2"/><rect x="1348.9" y="209.9" width="13" height="13" fill="none" stroke="#fff" stroke-opacity="0.85" stroke-width="2"/><rect x="1316.6" y="256.0" width="13" height="13" fill="none" stroke="#fff" stroke-opacity="0.85" stroke-width="2"/><rect x="1164.0" y="264.9" width="13" height="13" fill="none" stroke="#fff" stroke-opacity="0.85" stroke-width="2"/><rect x="1197.8" y="261.8" width="13" height="13" fill="none" stroke="#fff" stroke-opacity="0.85" stroke-width="2"/><rect x="1218.4" y="266.8" width="13" height="13" fill="none" stroke="#fff" stroke-opacity="0.85" stroke-width="2"/><rect x="1253.8" y="284.8" width="13" height="13" fill="none" stroke="#fff" stroke-opacity="0.85" stroke-width="2"/><rect x="1201.0" y="314.8" width="13" height="13" fill="none" stroke="#fff" stroke-opacity="0.85" stroke-width="2"/><rect x="1335.9" y="335.1" width="13" height="13" fill="none" stroke="#fff" stroke-opacity="0.85" stroke-width="2"/><rect x="1201.0" y="364.9" width="13" height="13" fill="none" stroke="#fff" stroke-opacity="0.85" stroke-width="2"/><rect x="1198.0" y="476.9" width="13" height="13" fill="none" stroke="#fff" stroke-opacity="0.85" stroke-width="2"/><circle cx="1149.8" cy="150.1" r="4.4" fill="#00ff00" stroke="#111" stroke-width="1.15"/><circle cx="1173.4" cy="172" r="4.4" fill="#4a7d4c" stroke="#111" stroke-width="1.15"/><circle cx="1210.1" cy="163.6" r="4.4" fill="#a9b064" stroke="#111" stroke-width="1.15"/><circle cx="1230.5" cy="157" r="4.4" fill="#ffff00" stroke="#111" stroke-width="1.15"/><circle cx="1257.5" cy="160.9" r="4.4" fill="#e2c244" stroke="#111" stroke-width="1.15"/><circle cx="1290.7" cy="167.5" r="4.4" fill="#dca446" stroke="#111" stroke-width="1.15"/><circle cx="1211.5" cy="184" r="4.4" fill="#596a4d" stroke="#111" stroke-width="1.15"/><circle cx="1278" cy="199" r="4.4" fill="#6e544a" stroke="#111" stroke-width="1.15"/><circle cx="1264.3" cy="205.8" r="4.4" fill="#c49c8a" stroke="#111" stroke-width="1.15"/><circle cx="1175.9" cy="216.3" r="4.4" fill="#74aaa2" stroke="#111" stroke-width="1.15"/><circle cx="1159.4" cy="234.3" r="4.4" fill="#00ffff" stroke="#111" stroke-width="1.15"/><circle cx="1336.5" cy="173.1" r="4.4" fill="#d68a3a" stroke="#111" stroke-width="1.15"/><circle cx="1493" cy="182.3" r="4.4" fill="#ff0000" stroke="#111" stroke-width="1.15"/><circle cx="1422.4" cy="200.4" r="4.4" fill="#b9404e" stroke="#111" stroke-width="1.15"/><circle cx="1356.7" cy="214" r="4.4" fill="#c46474" stroke="#111" stroke-width="1.15"/><circle cx="1327" cy="259.8" r="4.4" fill="#bb64a0" stroke="#111" stroke-width="1.15"/><circle cx="1163.8" cy="265.1" r="4.4" fill="#1f8a94" stroke="#111" stroke-width="1.15"/><circle cx="1200.3" cy="264.3" r="4.4" fill="#6a7c94" stroke="#111" stroke-width="1.15"/><circle cx="1222.2" cy="272.5" r="4.4" fill="#9294b4" stroke="#111" stroke-width="1.15"/><circle cx="1263" cy="292.9" r="4.4" fill="#624a72" stroke="#111" stroke-width="1.15"/><circle cx="1201.9" cy="315.7" r="4.4" fill="#5a6aa4" stroke="#111" stroke-width="1.15"/><circle cx="1345.9" cy="340.3" r="4.4" fill="#ff00ff" stroke="#111" stroke-width="1.15"/><circle cx="1204.3" cy="371.7" r="4.4" fill="#424a94" stroke="#111" stroke-width="1.15"/><circle cx="1202.1" cy="479.6" r="4.4" fill="#0000ff" stroke="#111" stroke-width="1.15"/><rect x="1221.2" y="222" width="12.5" height="12.5" fill="#fff" fill-opacity="0.0" stroke="#000" stroke-width="2.5"/><rect x="1223" y="224" width="9" height="9" fill="none" stroke="#fff" stroke-width="1.3"/><circle cx="1225" cy="225.9" r="4.6" fill="#a2a2a2" stroke="#000" stroke-width="1.3"/><circle cx="1241.3" cy="273.8" r="4.3" fill="#000" stroke="#000" stroke-width="1"/></svg>
<div class="a" style="left:1012.5px;top:613px;width:5px;height:1px;background:#e0e0e0;"></div>
<div class="t" style="left:1004.26px;top:608.45px;font-size:14px;color:#d4d4d4;-webkit-text-stroke:0.2px currentColor;">0</div>
<div class="a" style="left:1012.5px;top:572px;width:5px;height:1px;background:#e0e0e0;"></div>
<div class="t" style="left:984.83px;top:567.57px;font-size:14px;color:#d4d4d4;-webkit-text-stroke:0.2px currentColor;">0,05</div>
<div class="a" style="left:1012.5px;top:531px;width:5px;height:1px;background:#e0e0e0;"></div>
<div class="t" style="left:992.71px;top:526.69px;font-size:14px;color:#d4d4d4;-webkit-text-stroke:0.2px currentColor;">0,1</div>
<div class="a" style="left:1012.5px;top:490px;width:5px;height:1px;background:#e0e0e0;"></div>
<div class="t" style="left:984.83px;top:485.81px;font-size:14px;color:#d4d4d4;-webkit-text-stroke:0.2px currentColor;">0,15</div>
<div class="a" style="left:1012.5px;top:449px;width:5px;height:1px;background:#e0e0e0;"></div>
<div class="t" style="left:992.74px;top:444.93px;font-size:14px;color:#d4d4d4;-webkit-text-stroke:0.2px currentColor;">0,2</div>
<div class="a" style="left:1012.5px;top:409px;width:5px;height:1px;background:#e0e0e0;"></div>
<div class="t" style="left:984.83px;top:404.05px;font-size:14px;color:#d4d4d4;-webkit-text-stroke:0.2px currentColor;">0,25</div>
<div class="a" style="left:1012.5px;top:368px;width:5px;height:1px;background:#e0e0e0;"></div>
<div class="t" style="left:992.64px;top:363.17px;font-size:14px;color:#d4d4d4;-webkit-text-stroke:0.2px currentColor;">0,3</div>
<div class="a" style="left:1012.5px;top:327px;width:5px;height:1px;background:#e0e0e0;"></div>
<div class="t" style="left:984.83px;top:322.29px;font-size:14px;color:#d4d4d4;-webkit-text-stroke:0.2px currentColor;">0,35</div>
<div class="a" style="left:1012.5px;top:286px;width:5px;height:1px;background:#e0e0e0;"></div>
<div class="t" style="left:992.43px;top:281.41px;font-size:14px;color:#d4d4d4;-webkit-text-stroke:0.2px currentColor;">0,4</div>
<div class="a" style="left:1012.5px;top:245px;width:5px;height:1px;background:#e0e0e0;"></div>
<div class="t" style="left:984.83px;top:240.53px;font-size:14px;color:#d4d4d4;-webkit-text-stroke:0.2px currentColor;">0,45</div>
<div class="a" style="left:1012.5px;top:204px;width:5px;height:1px;background:#e0e0e0;"></div>
<div class="t" style="left:992.60px;top:199.65px;font-size:14px;color:#d4d4d4;-webkit-text-stroke:0.2px currentColor;">0,5</div>
<div class="a" style="left:1012.5px;top:163px;width:5px;height:1px;background:#e0e0e0;"></div>
<div class="t" style="left:984.83px;top:158.77px;font-size:14px;color:#d4d4d4;-webkit-text-stroke:0.2px currentColor;">0,55</div>
<div class="a" style="left:1018px;top:613px;width:1px;height:6px;background:#e0e0e0;"></div>
<div class="t" style="left:1014.10px;top:623.15px;font-size:14px;color:#d4d4d4;-webkit-text-stroke:0.2px currentColor;">0</div>
<div class="a" style="left:1071px;top:613px;width:1px;height:6px;background:#e0e0e0;"></div>
<div class="t" style="left:1057.59px;top:623.15px;font-size:14px;color:#d4d4d4;-webkit-text-stroke:0.2px currentColor;">0,05</div>
<div class="a" style="left:1124px;top:613px;width:1px;height:6px;background:#e0e0e0;"></div>
<div class="t" style="left:1114.72px;top:623.15px;font-size:14px;color:#d4d4d4;-webkit-text-stroke:0.2px currentColor;">0,1</div>
<div class="a" style="left:1177px;top:613px;width:1px;height:6px;background:#e0e0e0;"></div>
<div class="t" style="left:1163.98px;top:623.15px;font-size:14px;color:#d4d4d4;-webkit-text-stroke:0.2px currentColor;">0,15</div>
<div class="a" style="left:1230px;top:613px;width:1px;height:6px;background:#e0e0e0;"></div>
<div class="t" style="left:1221.14px;top:623.15px;font-size:14px;color:#d4d4d4;-webkit-text-stroke:0.2px currentColor;">0,2</div>
<div class="a" style="left:1284px;top:613px;width:1px;height:6px;background:#e0e0e0;"></div>
<div class="t" style="left:1270.38px;top:623.15px;font-size:14px;color:#d4d4d4;-webkit-text-stroke:0.2px currentColor;">0,25</div>
<div class="a" style="left:1337px;top:613px;width:1px;height:6px;background:#e0e0e0;"></div>
<div class="t" style="left:1327.49px;top:623.15px;font-size:14px;color:#d4d4d4;-webkit-text-stroke:0.2px currentColor;">0,3</div>
<div class="a" style="left:1390px;top:613px;width:1px;height:6px;background:#e0e0e0;"></div>
<div class="t" style="left:1376.79px;top:623.15px;font-size:14px;color:#d4d4d4;-webkit-text-stroke:0.2px currentColor;">0,35</div>
<div class="a" style="left:1443px;top:613px;width:1px;height:6px;background:#e0e0e0;"></div>
<div class="t" style="left:1433.78px;top:623.15px;font-size:14px;color:#d4d4d4;-webkit-text-stroke:0.2px currentColor;">0,4</div>
<div class="a" style="left:1496px;top:613px;width:1px;height:6px;background:#e0e0e0;"></div>
<div class="t" style="left:1483.18px;top:623.15px;font-size:14px;color:#d4d4d4;-webkit-text-stroke:0.2px currentColor;">0,45</div>
<div class="a" style="left:1550px;top:613px;width:1px;height:6px;background:#e0e0e0;"></div>
<div class="t" style="left:1540.27px;top:623.15px;font-size:14px;color:#d4d4d4;-webkit-text-stroke:0.2px currentColor;">0,5</div>
<div class="a" style="left:1603px;top:613px;width:1px;height:6px;background:#e0e0e0;"></div>
<div class="t" style="left:1589.59px;top:623.15px;font-size:14px;color:#d4d4d4;-webkit-text-stroke:0.2px currentColor;">0,55</div>
<div class="a" style="left:1449.5px;top:438px;width:205px;height:135px;background:#242424;"></div>
<div class="a" style="left:1453.5px;top:441px;width:197.5px;height:130.3px;border:1.5px solid #8c8c8c;box-sizing:border-box;overflow:hidden;"><div class="a" style="left:0;top:0;width:100%;height:100%;background:linear-gradient(135deg,#b8ff00 0%,#ffff10 45%,#ffb000 100%);"></div><div class="a" style="left:0;top:0;width:100%;height:100%;background:linear-gradient(150deg,#609a00 0%,#8a9400 35%,#9a9a00 50%,#8a6a00 100%);clip-path:polygon(0 0,100% 0,100% 89%,0 11%);"></div></div>
<svg class="a" style="left:1440px;top:430px" width="228" height="160"><rect x="104.8" y="68.2" width="13.6" height="13.6" fill="none" stroke="#fff" stroke-opacity="0.9" stroke-width="2"/><circle cx="102" cy="50.8" r="4.6" fill="#ffff00" stroke="#000" stroke-width="1.3"/></svg>
<div class="a" style="left:1402px;top:581.5px;width:253px;height:30.5px;background:#2a2a2a;"></div>
<div class="t" style="left:1401.36px;top:585.37px;font-size:20px;color:#f0f0f0;-webkit-text-stroke:0.2px currentColor;transform:scaleX(0.9946);">RGB Triplet: 255, 255, 0</div>
<div class="t" style="left:50.33px;top:656.31px;font-size:28.7px;color:#f2f2f2;-webkit-text-stroke:0.2px currentColor;transform:scaleX(1.0228);">Avg dE2000: 3,15</div>
<div class="t" style="left:44.42px;top:697.71px;font-size:28.7px;color:#f2f2f2;-webkit-text-stroke:0.2px currentColor;transform:scaleX(1.0473);">Max dE2000: 4,41</div>
<div class="t" style="left:13.79px;top:745.31px;font-size:28.7px;color:#f2f2f2;-webkit-text-stroke:0.2px currentColor;transform:scaleX(1.0499);">Current Reading</div>
<div class="t" style="left:14.09px;top:783.91px;font-size:23.5px;color:#f2f2f2;-webkit-text-stroke:0.2px currentColor;transform:scaleX(1.0662);">x: 0,4169</div>
<div class="t" style="left:170.84px;top:783.91px;font-size:23.5px;color:#f2f2f2;-webkit-text-stroke:0.2px currentColor;transform:scaleX(1.0743);">y: 0,5147</div>
<div class="t" style="left:14.02px;top:825.21px;font-size:23.5px;color:#f2f2f2;-webkit-text-stroke:0.2px currentColor;transform:scaleX(1.0640);">fL: 99,74</div>
<div class="t" style="left:13.28px;top:859.11px;font-size:23.5px;color:#f2f2f2;-webkit-text-stroke:0.2px currentColor;transform:scaleX(1.1211);">cd/m²: 341,74</div>
<div class="a" style="left:320.5px;top:663px;width:1345.5px;height:227px;background:#1e1e1e;"></div>
<div class="a" style="left:320.5px;top:663px;width:1347.5px;height:1.5px;background:#0a0a0a;"></div>
<div class="a" style="left:320.5px;top:664.5px;width:1347.5px;height:12px;background:#2c2c2c;"></div>
<div class="a" style="left:320.5px;top:676.5px;width:1347.5px;height:12px;background:#161616;"></div>
<div class="a" style="left:321.5px;top:689.3px;width:1347.5px;height:23.38px;background:#3c3c3c;"></div>
<div class="a" style="left:321.5px;top:712.4799999999999px;width:1347.5px;height:23.38px;background:#7c7c7c;"></div>
<div class="a" style="left:321.5px;top:735.66px;width:1347.5px;height:23.38px;background:#3c3c3c;"></div>
<div class="a" style="left:321.5px;top:758.8399999999999px;width:1347.5px;height:23.38px;background:#7c7c7c;"></div>
<div class="a" style="left:321.5px;top:782.02px;width:1347.5px;height:23.38px;background:#3c3c3c;"></div>
<div class="a" style="left:321.5px;top:805.1999999999999px;width:1347.5px;height:23.38px;background:#7c7c7c;"></div>
<div class="a" style="left:321.5px;top:828.3799999999999px;width:1347.5px;height:23.38px;background:#3c3c3c;"></div>
<div class="a" style="left:321.5px;top:851.56px;width:1347.5px;height:23.38px;background:#7c7c7c;"></div>
<div class="t" style="left:492.31px;top:670.32px;font-size:13.8px;color:#ececec;-webkit-text-stroke:0.55px currentColor;transform:scaleX(1.3756);">White</div>
<div class="t" style="left:553.52px;top:670.32px;font-size:13.8px;color:#ececec;-webkit-text-stroke:0.55px currentColor;transform:scaleX(1.2790);">Gray 80</div>
<div class="t" style="left:624.12px;top:670.32px;font-size:13.8px;color:#ececec;-webkit-text-stroke:0.55px currentColor;transform:scaleX(1.2715);">Gray 65</div>
<div class="t" style="left:695.12px;top:670.32px;font-size:13.8px;color:#ececec;-webkit-text-stroke:0.55px currentColor;transform:scaleX(1.2810);">Gray 50</div>
<div class="t" style="left:765.82px;top:670.32px;font-size:13.8px;color:#ececec;-webkit-text-stroke:0.55px currentColor;transform:scaleX(1.2715);">Gray 35</div>
<div class="t" style="left:839.27px;top:670.32px;font-size:13.8px;color:#ececec;-webkit-text-stroke:0.55px currentColor;transform:scaleX(1.2576);">Black</div>
<div class="t" style="left:892.54px;top:670.32px;font-size:13.8px;color:#ececec;-webkit-text-stroke:0.55px currentColor;transform:scaleX(1.2806);">Dark Skin</div>
<div class="t" style="left:977.57px;top:670.32px;font-size:13.8px;color:#ececec;-webkit-text-stroke:0.55px currentColor;transform:scaleX(1.2530);">Light Skin</div>
<div class="t" style="left:1062.27px;top:670.32px;font-size:13.8px;color:#ececec;-webkit-text-stroke:0.55px currentColor;transform:scaleX(1.2532);">Blue Sky</div>
<div class="t" style="left:1138.54px;top:670.32px;font-size:13.8px;color:#ececec;-webkit-text-stroke:0.55px currentColor;transform:scaleX(1.2793);">Foliage</div>
<div class="t" style="left:1204.51px;top:670.32px;font-size:13.8px;color:#ececec;-webkit-text-stroke:0.55px currentColor;transform:scaleX(1.3102);">Blue Flower</div>
<div class="t" style="left:1308.53px;top:670.32px;font-size:13.8px;color:#ececec;-webkit-text-stroke:0.55px currentColor;transform:scaleX(1.2885);">Bluish Green</div>
<div class="t" style="left:1419.65px;top:670.32px;font-size:13.8px;color:#ececec;-webkit-text-stroke:0.55px currentColor;transform:scaleX(1.2907);">Orange</div>
<div class="t" style="left:1486.71px;top:670.32px;font-size:13.8px;color:#ececec;-webkit-text-stroke:0.55px currentColor;transform:scaleX(1.3110);">Purplish Blue</div>
<div class="t" style="left:1601.35px;top:670.32px;font-size:13.8px;color:#ececec;-webkit-text-stroke:0.55px currentColor;transform:scaleX(1.2744);">Moderate Red</div>
<div class="t" style="left:336.46px;top:693.64px;font-size:15.9px;color:#ececec;font-weight:bold;transform:scaleX(1.1601);">x: CIE31</div>
<div class="t" style="left:486.76px;top:693.64px;font-size:15.9px;color:#e8e8e8;-webkit-text-stroke:0.2px currentColor;transform:scaleX(1.1698);">0,31</div>
<div class="t" style="left:553.66px;top:693.64px;font-size:15.9px;color:#e8e8e8;-webkit-text-stroke:0.2px currentColor;transform:scaleX(1.1698);">0,31</div>
<div class="t" style="left:624.36px;top:693.64px;font-size:15.9px;color:#e8e8e8;-webkit-text-stroke:0.2px currentColor;transform:scaleX(1.1698);">0,31</div>
<div class="t" style="left:695.36px;top:693.64px;font-size:15.9px;color:#e8e8e8;-webkit-text-stroke:0.2px currentColor;transform:scaleX(1.1698);">0,31</div>
<div class="t" style="left:765.96px;top:693.64px;font-size:15.9px;color:#e8e8e8;-webkit-text-stroke:0.2px currentColor;transform:scaleX(1.1698);">0,31</div>
<div class="t" style="left:836.66px;top:693.64px;font-size:15.9px;color:#e8e8e8;-webkit-text-stroke:0.2px currentColor;transform:scaleX(1.1698);">0,28</div>
<div class="t" style="left:893.36px;top:693.64px;font-size:15.9px;color:#e8e8e8;-webkit-text-stroke:0.2px currentColor;transform:scaleX(1.1698);">0,41</div>
<div class="t" style="left:978.26px;top:693.64px;font-size:15.9px;color:#e8e8e8;-webkit-text-stroke:0.2px currentColor;transform:scaleX(1.1698);">0,38</div>
<div class="t" style="left:1062.96px;top:693.64px;font-size:15.9px;color:#e8e8e8;-webkit-text-stroke:0.2px currentColor;transform:scaleX(1.1698);">0,25</div>
<div class="t" style="left:1139.26px;top:693.64px;font-size:15.9px;color:#e8e8e8;-webkit-text-stroke:0.2px currentColor;transform:scaleX(1.1698);">0,35</div>
<div class="t" style="left:1205.26px;top:693.64px;font-size:15.9px;color:#e8e8e8;-webkit-text-stroke:0.2px currentColor;transform:scaleX(1.1698);">0,27</div>
<div class="t" style="left:1309.26px;top:693.64px;font-size:15.9px;color:#e8e8e8;-webkit-text-stroke:0.2px currentColor;transform:scaleX(1.1698);">0,26</div>
<div class="t" style="left:1419.76px;top:693.64px;font-size:15.9px;color:#e8e8e8;-webkit-text-stroke:0.2px currentColor;transform:scaleX(1.1698);">0,52</div>
<div class="t" style="left:1487.46px;top:693.64px;font-size:15.9px;color:#e8e8e8;-webkit-text-stroke:0.2px currentColor;transform:scaleX(1.1698);">0,21</div>
<div class="t" style="left:1602.06px;top:693.64px;font-size:15.9px;color:#e8e8e8;-webkit-text-stroke:0.2px currentColor;transform:scaleX(1.1698);">0,47</div>
<div class="t" style="left:336.46px;top:716.82px;font-size:15.9px;color:#ececec;font-weight:bold;transform:scaleX(1.1601);">y: CIE31</div>
<div class="t" style="left:486.76px;top:716.82px;font-size:15.9px;color:#e8e8e8;-webkit-text-stroke:0.2px currentColor;transform:scaleX(1.1698);">0,33</div>
<div class="t" style="left:553.66px;top:716.82px;font-size:15.9px;color:#e8e8e8;-webkit-text-stroke:0.2px currentColor;transform:scaleX(1.1698);">0,33</div>
<div class="t" style="left:624.36px;top:716.82px;font-size:15.9px;color:#e8e8e8;-webkit-text-stroke:0.2px currentColor;transform:scaleX(1.1698);">0,33</div>
<div class="t" style="left:695.36px;top:716.82px;font-size:15.9px;color:#e8e8e8;-webkit-text-stroke:0.2px currentColor;transform:scaleX(1.1698);">0,33</div>
<div class="t" style="left:765.96px;top:716.82px;font-size:15.9px;color:#e8e8e8;-webkit-text-stroke:0.2px currentColor;transform:scaleX(1.1698);">0,33</div>
<div class="t" style="left:836.66px;top:716.82px;font-size:15.9px;color:#e8e8e8;-webkit-text-stroke:0.2px currentColor;transform:scaleX(1.1698);">0,25</div>
<div class="t" style="left:893.36px;top:716.82px;font-size:15.9px;color:#e8e8e8;-webkit-text-stroke:0.2px currentColor;transform:scaleX(1.1698);">0,37</div>
<div class="t" style="left:978.26px;top:716.82px;font-size:15.9px;color:#e8e8e8;-webkit-text-stroke:0.2px currentColor;transform:scaleX(1.1698);">0,36</div>
<div class="t" style="left:1062.96px;top:716.82px;font-size:15.9px;color:#e8e8e8;-webkit-text-stroke:0.2px currentColor;transform:scaleX(1.1698);">0,27</div>
<div class="t" style="left:1139.26px;top:716.82px;font-size:15.9px;color:#e8e8e8;-webkit-text-stroke:0.2px currentColor;transform:scaleX(1.1698);">0,44</div>
<div class="t" style="left:1205.26px;top:716.82px;font-size:15.9px;color:#e8e8e8;-webkit-text-stroke:0.2px currentColor;transform:scaleX(1.1698);">0,25</div>
<div class="t" style="left:1309.26px;top:716.82px;font-size:15.9px;color:#e8e8e8;-webkit-text-stroke:0.2px currentColor;transform:scaleX(1.1698);">0,37</div>
<div class="t" style="left:1419.76px;top:716.82px;font-size:15.9px;color:#e8e8e8;-webkit-text-stroke:0.2px currentColor;transform:scaleX(1.1698);">0,41</div>
<div class="t" style="left:1487.46px;top:716.82px;font-size:15.9px;color:#e8e8e8;-webkit-text-stroke:0.2px currentColor;transform:scaleX(1.1698);">0,20</div>
<div class="t" style="left:1602.06px;top:716.82px;font-size:15.9px;color:#e8e8e8;-webkit-text-stroke:0.2px currentColor;transform:scaleX(1.1698);">0,32</div>
<div class="t" style="left:336.28px;top:740.00px;font-size:15.9px;color:#ececec;font-weight:bold;transform:scaleX(1.1601);">Y</div>
<div class="t" style="left:486.80px;top:740.00px;font-size:15.9px;color:#e8e8e8;-webkit-text-stroke:0.2px currentColor;transform:scaleX(1.1698);">341,66</div>
<div class="t" style="left:553.47px;top:740.00px;font-size:15.9px;color:#e8e8e8;-webkit-text-stroke:0.2px currentColor;transform:scaleX(1.1698);">280,17</div>
<div class="t" style="left:624.17px;top:740.00px;font-size:15.9px;color:#e8e8e8;-webkit-text-stroke:0.2px currentColor;transform:scaleX(1.1698);">233,07</div>
<div class="t" style="left:694.71px;top:740.00px;font-size:15.9px;color:#e8e8e8;-webkit-text-stroke:0.2px currentColor;transform:scaleX(1.1698);">184,83</div>
<div class="t" style="left:765.31px;top:740.00px;font-size:15.9px;color:#e8e8e8;-webkit-text-stroke:0.2px currentColor;transform:scaleX(1.1698);">130,69</div>
<div class="t" style="left:836.66px;top:740.00px;font-size:15.9px;color:#e8e8e8;-webkit-text-stroke:0.2px currentColor;transform:scaleX(1.1698);">0,11</div>
<div class="t" style="left:893.40px;top:740.00px;font-size:15.9px;color:#e8e8e8;-webkit-text-stroke:0.2px currentColor;transform:scaleX(1.1698);">37,34</div>
<div class="t" style="left:977.61px;top:740.00px;font-size:15.9px;color:#e8e8e8;-webkit-text-stroke:0.2px currentColor;transform:scaleX(1.1698);">133,90</div>
<div class="t" style="left:1062.77px;top:740.00px;font-size:15.9px;color:#e8e8e8;-webkit-text-stroke:0.2px currentColor;transform:scaleX(1.1698);">70,06</div>
<div class="t" style="left:1139.58px;top:740.00px;font-size:15.9px;color:#e8e8e8;-webkit-text-stroke:0.2px currentColor;transform:scaleX(1.1698);">49,78</div>
<div class="t" style="left:1205.21px;top:740.00px;font-size:15.9px;color:#e8e8e8;-webkit-text-stroke:0.2px currentColor;transform:scaleX(1.1698);">86,79</div>
<div class="t" style="left:1308.61px;top:740.00px;font-size:15.9px;color:#e8e8e8;-webkit-text-stroke:0.2px currentColor;transform:scaleX(1.1698);">159,84</div>
<div class="t" style="left:1419.11px;top:740.00px;font-size:15.9px;color:#e8e8e8;-webkit-text-stroke:0.2px currentColor;transform:scaleX(1.1698);">108,68</div>
<div class="t" style="left:1487.78px;top:740.00px;font-size:15.9px;color:#e8e8e8;-webkit-text-stroke:0.2px currentColor;transform:scaleX(1.1698);">44,20</div>
<div class="t" style="left:1601.87px;top:740.00px;font-size:15.9px;color:#e8e8e8;-webkit-text-stroke:0.2px currentColor;transform:scaleX(1.1698);">72,94</div>
<div class="t" style="left:336.42px;top:763.18px;font-size:15.9px;color:#ececec;font-weight:bold;transform:scaleX(1.1601);">Target x:CIE31</div>
<div class="t" style="left:486.76px;top:763.18px;font-size:15.9px;color:#e8e8e8;-webkit-text-stroke:0.2px currentColor;transform:scaleX(1.1698);">0,31</div>
<div class="t" style="left:553.66px;top:763.18px;font-size:15.9px;color:#e8e8e8;-webkit-text-stroke:0.2px currentColor;transform:scaleX(1.1698);">0,31</div>
<div class="t" style="left:624.36px;top:763.18px;font-size:15.9px;color:#e8e8e8;-webkit-text-stroke:0.2px currentColor;transform:scaleX(1.1698);">0,31</div>
<div class="t" style="left:695.36px;top:763.18px;font-size:15.9px;color:#e8e8e8;-webkit-text-stroke:0.2px currentColor;transform:scaleX(1.1698);">0,31</div>
<div class="t" style="left:765.96px;top:763.18px;font-size:15.9px;color:#e8e8e8;-webkit-text-stroke:0.2px currentColor;transform:scaleX(1.1698);">0,31</div>
<div class="t" style="left:836.66px;top:763.18px;font-size:15.9px;color:#e8e8e8;-webkit-text-stroke:0.2px currentColor;transform:scaleX(1.1698);">0,31</div>
<div class="t" style="left:893.36px;top:763.18px;font-size:15.9px;color:#e8e8e8;-webkit-text-stroke:0.2px currentColor;transform:scaleX(1.1698);">0,40</div>
<div class="t" style="left:978.26px;top:763.18px;font-size:15.9px;color:#e8e8e8;-webkit-text-stroke:0.2px currentColor;transform:scaleX(1.1698);">0,38</div>
<div class="t" style="left:1062.96px;top:763.18px;font-size:15.9px;color:#e8e8e8;-webkit-text-stroke:0.2px currentColor;transform:scaleX(1.1698);">0,25</div>
<div class="t" style="left:1139.26px;top:763.18px;font-size:15.9px;color:#e8e8e8;-webkit-text-stroke:0.2px currentColor;transform:scaleX(1.1698);">0,34</div>
<div class="t" style="left:1205.26px;top:763.18px;font-size:15.9px;color:#e8e8e8;-webkit-text-stroke:0.2px currentColor;transform:scaleX(1.1698);">0,27</div>
<div class="t" style="left:1309.26px;top:763.18px;font-size:15.9px;color:#e8e8e8;-webkit-text-stroke:0.2px currentColor;transform:scaleX(1.1698);">0,26</div>
<div class="t" style="left:1419.76px;top:763.18px;font-size:15.9px;color:#e8e8e8;-webkit-text-stroke:0.2px currentColor;transform:scaleX(1.1698);">0,51</div>
<div class="t" style="left:1487.46px;top:763.18px;font-size:15.9px;color:#e8e8e8;-webkit-text-stroke:0.2px currentColor;transform:scaleX(1.1698);">0,22</div>
<div class="t" style="left:1602.06px;top:763.18px;font-size:15.9px;color:#e8e8e8;-webkit-text-stroke:0.2px currentColor;transform:scaleX(1.1698);">0,46</div>
<div class="t" style="left:336.42px;top:786.36px;font-size:15.9px;color:#ececec;font-weight:bold;transform:scaleX(1.1601);">Target y:CIE31</div>
<div class="t" style="left:486.76px;top:786.36px;font-size:15.9px;color:#e8e8e8;-webkit-text-stroke:0.2px currentColor;transform:scaleX(1.1698);">0,33</div>
<div class="t" style="left:553.66px;top:786.36px;font-size:15.9px;color:#e8e8e8;-webkit-text-stroke:0.2px currentColor;transform:scaleX(1.1698);">0,33</div>
<div class="t" style="left:624.36px;top:786.36px;font-size:15.9px;color:#e8e8e8;-webkit-text-stroke:0.2px currentColor;transform:scaleX(1.1698);">0,33</div>
<div class="t" style="left:695.36px;top:786.36px;font-size:15.9px;color:#e8e8e8;-webkit-text-stroke:0.2px currentColor;transform:scaleX(1.1698);">0,33</div>
<div class="t" style="left:765.96px;top:786.36px;font-size:15.9px;color:#e8e8e8;-webkit-text-stroke:0.2px currentColor;transform:scaleX(1.1698);">0,33</div>
<div class="t" style="left:836.66px;top:786.36px;font-size:15.9px;color:#e8e8e8;-webkit-text-stroke:0.2px currentColor;transform:scaleX(1.1698);">0,33</div>
<div class="t" style="left:893.36px;top:786.36px;font-size:15.9px;color:#e8e8e8;-webkit-text-stroke:0.2px currentColor;transform:scaleX(1.1698);">0,36</div>
<div class="t" style="left:978.26px;top:786.36px;font-size:15.9px;color:#e8e8e8;-webkit-text-stroke:0.2px currentColor;transform:scaleX(1.1698);">0,36</div>
<div class="t" style="left:1062.96px;top:786.36px;font-size:15.9px;color:#e8e8e8;-webkit-text-stroke:0.2px currentColor;transform:scaleX(1.1698);">0,27</div>
<div class="t" style="left:1139.26px;top:786.36px;font-size:15.9px;color:#e8e8e8;-webkit-text-stroke:0.2px currentColor;transform:scaleX(1.1698);">0,43</div>
<div class="t" style="left:1205.26px;top:786.36px;font-size:15.9px;color:#e8e8e8;-webkit-text-stroke:0.2px currentColor;transform:scaleX(1.1698);">0,25</div>
<div class="t" style="left:1309.26px;top:786.36px;font-size:15.9px;color:#e8e8e8;-webkit-text-stroke:0.2px currentColor;transform:scaleX(1.1698);">0,36</div>
<div class="t" style="left:1419.76px;top:786.36px;font-size:15.9px;color:#e8e8e8;-webkit-text-stroke:0.2px currentColor;transform:scaleX(1.1698);">0,41</div>
<div class="t" style="left:1487.46px;top:786.36px;font-size:15.9px;color:#e8e8e8;-webkit-text-stroke:0.2px currentColor;transform:scaleX(1.1698);">0,19</div>
<div class="t" style="left:1602.06px;top:786.36px;font-size:15.9px;color:#e8e8e8;-webkit-text-stroke:0.2px currentColor;transform:scaleX(1.1698);">0,31</div>
<div class="t" style="left:336.42px;top:809.54px;font-size:15.9px;color:#ececec;font-weight:bold;transform:scaleX(1.1601);">Target Y</div>
<div class="t" style="left:486.80px;top:809.54px;font-size:15.9px;color:#e8e8e8;-webkit-text-stroke:0.2px currentColor;transform:scaleX(1.1698);">341,66</div>
<div class="t" style="left:553.47px;top:809.54px;font-size:15.9px;color:#e8e8e8;-webkit-text-stroke:0.2px currentColor;transform:scaleX(1.1698);">270,36</div>
<div class="t" style="left:624.17px;top:809.54px;font-size:15.9px;color:#e8e8e8;-webkit-text-stroke:0.2px currentColor;transform:scaleX(1.1698);">217,84</div>
<div class="t" style="left:694.71px;top:809.54px;font-size:15.9px;color:#e8e8e8;-webkit-text-stroke:0.2px currentColor;transform:scaleX(1.1698);">167,76</div>
<div class="t" style="left:765.31px;top:809.54px;font-size:15.9px;color:#e8e8e8;-webkit-text-stroke:0.2px currentColor;transform:scaleX(1.1698);">116,82</div>
<div class="t" style="left:836.66px;top:809.54px;font-size:15.9px;color:#e8e8e8;-webkit-text-stroke:0.2px currentColor;transform:scaleX(1.1698);">0,00</div>
<div class="t" style="left:893.40px;top:809.54px;font-size:15.9px;color:#e8e8e8;-webkit-text-stroke:0.2px currentColor;transform:scaleX(1.1698);">34,42</div>
<div class="t" style="left:977.61px;top:809.54px;font-size:15.9px;color:#e8e8e8;-webkit-text-stroke:0.2px currentColor;transform:scaleX(1.1698);">119,22</div>
<div class="t" style="left:1062.77px;top:809.54px;font-size:15.9px;color:#e8e8e8;-webkit-text-stroke:0.2px currentColor;transform:scaleX(1.1698);">63,89</div>
<div class="t" style="left:1139.58px;top:809.54px;font-size:15.9px;color:#e8e8e8;-webkit-text-stroke:0.2px currentColor;transform:scaleX(1.1698);">44,53</div>
<div class="t" style="left:1205.07px;top:809.54px;font-size:15.9px;color:#e8e8e8;-webkit-text-stroke:0.2px currentColor;transform:scaleX(1.1698);">79,67</div>
<div class="t" style="left:1308.61px;top:809.54px;font-size:15.9px;color:#e8e8e8;-webkit-text-stroke:0.2px currentColor;transform:scaleX(1.1698);">143,06</div>
<div class="t" style="left:1419.62px;top:809.54px;font-size:15.9px;color:#e8e8e8;-webkit-text-stroke:0.2px currentColor;transform:scaleX(1.1698);">96,85</div>
<div class="t" style="left:1487.78px;top:809.54px;font-size:15.9px;color:#e8e8e8;-webkit-text-stroke:0.2px currentColor;transform:scaleX(1.1698);">40,16</div>
<div class="t" style="left:1601.87px;top:809.54px;font-size:15.9px;color:#e8e8e8;-webkit-text-stroke:0.2px currentColor;transform:scaleX(1.1698);">63,81</div>
<div class="t" style="left:335.86px;top:832.72px;font-size:15.9px;color:#ececec;font-weight:bold;transform:scaleX(1.1601);">ΔE 2000</div>
<div class="t" style="left:487.08px;top:832.72px;font-size:15.9px;color:#e8e8e8;-webkit-text-stroke:0.2px currentColor;transform:scaleX(1.1698);">4,09</div>
<div class="t" style="left:553.98px;top:832.72px;font-size:15.9px;color:#e8e8e8;-webkit-text-stroke:0.2px currentColor;transform:scaleX(1.1698);">4,03</div>
<div class="t" style="left:624.68px;top:832.72px;font-size:15.9px;color:#e8e8e8;-webkit-text-stroke:0.2px currentColor;transform:scaleX(1.1698);">4,17</div>
<div class="t" style="left:695.68px;top:832.72px;font-size:15.9px;color:#e8e8e8;-webkit-text-stroke:0.2px currentColor;transform:scaleX(1.1698);">4,33</div>
<div class="t" style="left:766.28px;top:832.72px;font-size:15.9px;color:#e8e8e8;-webkit-text-stroke:0.2px currentColor;transform:scaleX(1.1698);">4,41</div>
<div class="t" style="left:836.66px;top:832.72px;font-size:15.9px;color:#e8e8e8;-webkit-text-stroke:0.2px currentColor;transform:scaleX(1.1698);">0,54</div>
<div class="t" style="left:893.17px;top:832.72px;font-size:15.9px;color:#e8e8e8;-webkit-text-stroke:0.2px currentColor;transform:scaleX(1.1698);">2,46</div>
<div class="t" style="left:978.30px;top:832.72px;font-size:15.9px;color:#e8e8e8;-webkit-text-stroke:0.2px currentColor;transform:scaleX(1.1698);">3,75</div>
<div class="t" style="left:1063.00px;top:832.72px;font-size:15.9px;color:#e8e8e8;-webkit-text-stroke:0.2px currentColor;transform:scaleX(1.1698);">3,53</div>
<div class="t" style="left:1139.07px;top:832.72px;font-size:15.9px;color:#e8e8e8;-webkit-text-stroke:0.2px currentColor;transform:scaleX(1.1698);">2,95</div>
<div class="t" style="left:1205.07px;top:832.72px;font-size:15.9px;color:#e8e8e8;-webkit-text-stroke:0.2px currentColor;transform:scaleX(1.1698);">2,35</div>
<div class="t" style="left:1309.30px;top:832.72px;font-size:15.9px;color:#e8e8e8;-webkit-text-stroke:0.2px currentColor;transform:scaleX(1.1698);">3,89</div>
<div class="t" style="left:1419.80px;top:832.72px;font-size:15.9px;color:#e8e8e8;-webkit-text-stroke:0.2px currentColor;transform:scaleX(1.1698);">3,26</div>
<div class="t" style="left:1487.27px;top:832.72px;font-size:15.9px;color:#e8e8e8;-webkit-text-stroke:0.2px currentColor;transform:scaleX(1.1698);">2,70</div>
<div class="t" style="left:1602.10px;top:832.72px;font-size:15.9px;color:#e8e8e8;-webkit-text-stroke:0.2px currentColor;transform:scaleX(1.1698);">3,35</div>
<div class="t" style="left:335.86px;top:855.90px;font-size:15.9px;color:#ececec;font-weight:bold;transform:scaleX(1.1601);">ΔE ITP</div>
<div class="t" style="left:486.57px;top:855.90px;font-size:15.9px;color:#e8e8e8;-webkit-text-stroke:0.2px currentColor;transform:scaleX(1.1698);">2,72</div>
<div class="t" style="left:553.70px;top:855.90px;font-size:15.9px;color:#e8e8e8;-webkit-text-stroke:0.2px currentColor;transform:scaleX(1.1698);">3,80</div>
<div class="t" style="left:624.36px;top:855.90px;font-size:15.9px;color:#e8e8e8;-webkit-text-stroke:0.2px currentColor;transform:scaleX(1.1698);">5,73</div>
<div class="t" style="left:695.17px;top:855.90px;font-size:15.9px;color:#e8e8e8;-webkit-text-stroke:0.2px currentColor;transform:scaleX(1.1698);">7,68</div>
<div class="t" style="left:765.91px;top:855.90px;font-size:15.9px;color:#e8e8e8;-webkit-text-stroke:0.2px currentColor;transform:scaleX(1.1698);">8,59</div>
<div class="t" style="left:836.98px;top:855.90px;font-size:15.9px;color:#e8e8e8;-webkit-text-stroke:0.2px currentColor;transform:scaleX(1.1698);">48,00</div>
<div class="t" style="left:893.17px;top:855.90px;font-size:15.9px;color:#e8e8e8;-webkit-text-stroke:0.2px currentColor;transform:scaleX(1.1698);">7,28</div>
<div class="t" style="left:978.12px;top:855.90px;font-size:15.9px;color:#e8e8e8;-webkit-text-stroke:0.2px currentColor;transform:scaleX(1.1698);">9,15</div>
<div class="t" style="left:1062.77px;top:855.90px;font-size:15.9px;color:#e8e8e8;-webkit-text-stroke:0.2px currentColor;transform:scaleX(1.1698);">7,13</div>
<div class="t" style="left:1139.12px;top:855.90px;font-size:15.9px;color:#e8e8e8;-webkit-text-stroke:0.2px currentColor;transform:scaleX(1.1698);">9,61</div>
<div class="t" style="left:1205.07px;top:855.90px;font-size:15.9px;color:#e8e8e8;-webkit-text-stroke:0.2px currentColor;transform:scaleX(1.1698);">6,60</div>
<div class="t" style="left:1309.12px;top:855.90px;font-size:15.9px;color:#e8e8e8;-webkit-text-stroke:0.2px currentColor;transform:scaleX(1.1698);">9,70</div>
<div class="t" style="left:1419.11px;top:855.90px;font-size:15.9px;color:#e8e8e8;-webkit-text-stroke:0.2px currentColor;transform:scaleX(1.1698);">10,48</div>
<div class="t" style="left:1487.27px;top:855.90px;font-size:15.9px;color:#e8e8e8;-webkit-text-stroke:0.2px currentColor;transform:scaleX(1.1698);">7,65</div>
<div class="t" style="left:1601.40px;top:855.90px;font-size:15.9px;color:#e8e8e8;-webkit-text-stroke:0.2px currentColor;transform:scaleX(1.1698);">10,18</div>
<div class="a" style="left:321.5px;top:875px;width:1347.5px;height:14px;background:#646464;"></div>
<div class="a" style="left:323px;top:876px;width:14px;height:12px;background:#7e7e7e;border-radius:2px;"></div>
<div class="a" style="left:327px;top:877.5px;width:0;height:0;border-top:4.5px solid transparent;border-bottom:4.5px solid transparent;border-right:5px solid #3a3a3a;"></div>
<div class="a" style="left:343px;top:877px;width:650px;height:10px;background:#484848;border-radius:5px;"></div>
<div class="a" style="left:1648px;top:876px;width:14px;height:12px;background:#7e7e7e;border-radius:2px;"></div>
<div class="a" style="left:1653px;top:877.5px;width:0;height:0;border-top:4.5px solid transparent;border-bottom:4.5px solid transparent;border-left:5px solid #3a3a3a;"></div>
<div class="a" style="left:0px;top:928px;width:1668px;height:80px;background:#2a2a2a;"></div>
<div class="a" style="left:-33.3px;top:931.6px;width:62.3px;height:60.4px;background:linear-gradient(#a9a9a9 0%,#9a9a9a 40%,#6e6e6e 100%);border-radius:5px;box-shadow:inset 0 1px 0 rgba(255,255,255,0.18);"></div>
<div class="a" style="left:-27.0px;top:938px;width:49.9px;height:15.3px;background:#8a80c0;border-radius:5px;box-shadow:inset 1px 1px 1.5px rgba(0,0,0,0.35);"></div>
<div class="t" style="left:-23.18px;top:961.47px;font-size:12.2px;color:#282828;font-weight:bold;transform:scaleX(1.0450);">Blue</div>
<div class="t" style="left:-23.18px;top:976.37px;font-size:12.2px;color:#282828;font-weight:bold;transform:scaleX(1.0450);">Flower</div>
<div class="a" style="left:31.7px;top:931.6px;width:62.3px;height:60.4px;background:linear-gradient(#a9a9a9 0%,#9a9a9a 40%,#6e6e6e 100%);border-radius:5px;box-shadow:inset 0 1px 0 rgba(255,255,255,0.18);"></div>
<div class="a" style="left:38.0px;top:938px;width:49.9px;height:15.3px;background:#60c4ac;border-radius:5px;box-shadow:inset 1px 1px 1.5px rgba(0,0,0,0.35);"></div>
<div class="t" style="left:43.18px;top:961.47px;font-size:12.2px;color:#282828;font-weight:bold;transform:scaleX(1.0450);">Bluish</div>
<div class="t" style="left:43.53px;top:976.37px;font-size:12.2px;color:#282828;font-weight:bold;transform:scaleX(1.0450);">Green</div>
<div class="a" style="left:96.7px;top:931.6px;width:62.3px;height:60.4px;background:linear-gradient(#a9a9a9 0%,#9a9a9a 40%,#6e6e6e 100%);border-radius:5px;box-shadow:inset 0 1px 0 rgba(255,255,255,0.18);"></div>
<div class="a" style="left:103.0px;top:938px;width:49.9px;height:30.8px;background:#de7a2a;border-radius:5px;box-shadow:inset 1px 1px 1.5px rgba(0,0,0,0.35);"></div>
<div class="t" style="left:105.34px;top:976.37px;font-size:12.2px;color:#282828;font-weight:bold;transform:scaleX(1.0450);">Orange</div>
<div class="a" style="left:161.7px;top:931.6px;width:62.3px;height:60.4px;background:linear-gradient(#a9a9a9 0%,#9a9a9a 40%,#6e6e6e 100%);border-radius:5px;box-shadow:inset 0 1px 0 rgba(255,255,255,0.18);"></div>
<div class="a" style="left:168.0px;top:938px;width:49.9px;height:15.3px;background:#4858b0;border-radius:5px;box-shadow:inset 1px 1px 1.5px rgba(0,0,0,0.35);"></div>
<div class="t" style="left:167.15px;top:961.47px;font-size:12.2px;color:#282828;font-weight:bold;transform:scaleX(1.0450);">Purplish</div>
<div class="t" style="left:167.15px;top:976.37px;font-size:12.2px;color:#282828;font-weight:bold;transform:scaleX(1.0450);">Blue</div>
<div class="a" style="left:226.7px;top:931.6px;width:62.3px;height:60.4px;background:linear-gradient(#a9a9a9 0%,#9a9a9a 40%,#6e6e6e 100%);border-radius:5px;box-shadow:inset 0 1px 0 rgba(255,255,255,0.18);"></div>
<div class="a" style="left:233.0px;top:938px;width:49.9px;height:15.3px;background:#c85464;border-radius:5px;box-shadow:inset 1px 1px 1.5px rgba(0,0,0,0.35);"></div>
<div class="t" style="left:229.14px;top:961.47px;font-size:12.2px;color:#282828;font-weight:bold;transform:scaleX(1.0450);">Moderate</div>
<div class="t" style="left:229.14px;top:976.37px;font-size:12.2px;color:#282828;font-weight:bold;transform:scaleX(1.0450);">Red</div>
<div class="a" style="left:291.7px;top:931.6px;width:62.3px;height:60.4px;background:linear-gradient(#a9a9a9 0%,#9a9a9a 40%,#6e6e6e 100%);border-radius:5px;box-shadow:inset 0 1px 0 rgba(255,255,255,0.18);"></div>
<div class="a" style="left:298.0px;top:938px;width:49.9px;height:30.8px;background:#623c78;border-radius:5px;box-shadow:inset 1px 1px 1.5px rgba(0,0,0,0.35);"></div>
<div class="t" style="left:302.65px;top:976.37px;font-size:12.2px;color:#282828;font-weight:bold;transform:scaleX(1.0450);">Purple</div>
<div class="a" style="left:356.7px;top:931.6px;width:62.3px;height:60.4px;background:linear-gradient(#a9a9a9 0%,#9a9a9a 40%,#6e6e6e 100%);border-radius:5px;box-shadow:inset 0 1px 0 rgba(255,255,255,0.18);"></div>
<div class="a" style="left:363.0px;top:938px;width:49.9px;height:15.3px;background:#a4c044;border-radius:5px;box-shadow:inset 1px 1px 1.5px rgba(0,0,0,0.35);"></div>
<div class="t" style="left:367.73px;top:961.47px;font-size:12.2px;color:#282828;font-weight:bold;transform:scaleX(1.0450);">Yellow</div>
<div class="t" style="left:367.45px;top:976.37px;font-size:12.2px;color:#282828;font-weight:bold;transform:scaleX(1.0450);">Green</div>
<div class="a" style="left:421.7px;top:931.6px;width:62.3px;height:60.4px;background:linear-gradient(#a9a9a9 0%,#9a9a9a 40%,#6e6e6e 100%);border-radius:5px;box-shadow:inset 0 1px 0 rgba(255,255,255,0.18);"></div>
<div class="a" style="left:428.0px;top:938px;width:49.9px;height:15.3px;background:#e8a030;border-radius:5px;box-shadow:inset 1px 1px 1.5px rgba(0,0,0,0.35);"></div>
<div class="t" style="left:430.34px;top:961.47px;font-size:12.2px;color:#282828;font-weight:bold;transform:scaleX(1.0450);">Orange</div>
<div class="t" style="left:430.63px;top:976.37px;font-size:12.2px;color:#282828;font-weight:bold;transform:scaleX(1.0450);">Yellow</div>
<div class="a" style="left:486.7px;top:931.6px;width:62.3px;height:60.4px;background:linear-gradient(#a9a9a9 0%,#9a9a9a 40%,#6e6e6e 100%);border-radius:5px;box-shadow:inset 0 1px 0 rgba(255,255,255,0.18);"></div>
<div class="a" style="left:493.0px;top:938px;width:49.9px;height:30.8px;background:#3040a0;border-radius:5px;box-shadow:inset 1px 1px 1.5px rgba(0,0,0,0.35);"></div>
<div class="t" style="left:503.68px;top:976.37px;font-size:12.2px;color:#282828;font-weight:bold;transform:scaleX(1.0450);">Blue</div>
<div class="a" style="left:551.7px;top:931.6px;width:62.3px;height:60.4px;background:linear-gradient(#a9a9a9 0%,#9a9a9a 40%,#6e6e6e 100%);border-radius:5px;box-shadow:inset 0 1px 0 rgba(255,255,255,0.18);"></div>
<div class="a" style="left:558.0px;top:938px;width:49.9px;height:30.8px;background:#44984c;border-radius:5px;box-shadow:inset 1px 1px 1.5px rgba(0,0,0,0.35);"></div>
<div class="t" style="left:564.41px;top:976.37px;font-size:12.2px;color:#282828;font-weight:bold;transform:scaleX(1.0450);">Green</div>
<div class="a" style="left:616.7px;top:931.6px;width:62.3px;height:60.4px;background:linear-gradient(#a9a9a9 0%,#9a9a9a 40%,#6e6e6e 100%);border-radius:5px;box-shadow:inset 0 1px 0 rgba(255,255,255,0.18);"></div>
<div class="a" style="left:623.0px;top:938px;width:49.9px;height:30.8px;background:#bc3038;border-radius:5px;box-shadow:inset 1px 1px 1.5px rgba(0,0,0,0.35);"></div>
<div class="t" style="left:635.65px;top:976.37px;font-size:12.2px;color:#282828;font-weight:bold;transform:scaleX(1.0450);">Red</div>
<div class="a" style="left:681.7px;top:931.6px;width:62.3px;height:60.4px;background:linear-gradient(#a9a9a9 0%,#9a9a9a 40%,#6e6e6e 100%);border-radius:5px;box-shadow:inset 0 1px 0 rgba(255,255,255,0.18);"></div>
<div class="a" style="left:688.0px;top:938px;width:49.9px;height:30.8px;background:#ecc42c;border-radius:5px;box-shadow:inset 1px 1px 1.5px rgba(0,0,0,0.35);"></div>
<div class="t" style="left:692.73px;top:976.37px;font-size:12.2px;color:#282828;font-weight:bold;transform:scaleX(1.0450);">Yellow</div>
<div class="a" style="left:746.7px;top:931.6px;width:62.3px;height:60.4px;background:linear-gradient(#a9a9a9 0%,#9a9a9a 40%,#6e6e6e 100%);border-radius:5px;box-shadow:inset 0 1px 0 rgba(255,255,255,0.18);"></div>
<div class="a" style="left:753.0px;top:938px;width:49.9px;height:30.8px;background:#c05898;border-radius:5px;box-shadow:inset 1px 1px 1.5px rgba(0,0,0,0.35);"></div>
<div class="t" style="left:751.37px;top:976.37px;font-size:12.2px;color:#282828;font-weight:bold;transform:scaleX(1.0450);">Magenta</div>
<div class="a" style="left:811.7px;top:931.6px;width:62.3px;height:60.4px;background:linear-gradient(#a9a9a9 0%,#9a9a9a 40%,#6e6e6e 100%);border-radius:5px;box-shadow:inset 0 1px 0 rgba(255,255,255,0.18);"></div>
<div class="a" style="left:818.0px;top:938px;width:49.9px;height:30.8px;background:#1a8aa4;border-radius:5px;box-shadow:inset 1px 1px 1.5px rgba(0,0,0,0.35);"></div>
<div class="t" style="left:827.24px;top:976.37px;font-size:12.2px;color:#282828;font-weight:bold;transform:scaleX(1.0450);">Cyan</div>
<div class="a" style="left:876.7px;top:931.6px;width:62.3px;height:60.4px;background:linear-gradient(#a9a9a9 0%,#9a9a9a 40%,#6e6e6e 100%);border-radius:5px;box-shadow:inset 0 1px 0 rgba(255,255,255,0.18);"></div>
<div class="a" style="left:883.0px;top:938px;width:49.9px;height:30.8px;background:#ff0000;border-radius:5px;box-shadow:inset 1px 1px 1.5px rgba(0,0,0,0.35);"></div>
<div class="t" style="left:877.60px;top:976.37px;font-size:12.2px;color:#282828;font-weight:bold;transform:scaleX(1.0450);">100% Red</div>
<div class="a" style="left:941.7px;top:931.6px;width:62.3px;height:60.4px;background:linear-gradient(#a9a9a9 0%,#9a9a9a 40%,#6e6e6e 100%);border-radius:5px;box-shadow:inset 0 1px 0 rgba(255,255,255,0.18);"></div>
<div class="a" style="left:948.0px;top:938px;width:49.9px;height:15.3px;background:#00ff00;border-radius:5px;box-shadow:inset 1px 1px 1.5px rgba(0,0,0,0.35);"></div>
<div class="t" style="left:954.12px;top:961.47px;font-size:12.2px;color:#282828;font-weight:bold;transform:scaleX(1.0450);">100%</div>
<div class="t" style="left:954.41px;top:976.37px;font-size:12.2px;color:#282828;font-weight:bold;transform:scaleX(1.0450);">Green</div>
<div class="a" style="left:1006.7px;top:931.6px;width:62.3px;height:60.4px;background:linear-gradient(#a9a9a9 0%,#9a9a9a 40%,#6e6e6e 100%);border-radius:5px;box-shadow:inset 0 1px 0 rgba(255,255,255,0.18);"></div>
<div class="a" style="left:1013.0px;top:938px;width:49.9px;height:15.3px;background:#0000ff;border-radius:5px;box-shadow:inset 1px 1px 1.5px rgba(0,0,0,0.35);"></div>
<div class="t" style="left:1021.17px;top:961.47px;font-size:12.2px;color:#282828;font-weight:bold;transform:scaleX(1.0450);">100%</div>
<div class="t" style="left:1021.11px;top:976.37px;font-size:12.2px;color:#282828;font-weight:bold;transform:scaleX(1.0450);">Blue</div>
<div class="a" style="left:1071.7px;top:931.6px;width:62.3px;height:60.4px;background:linear-gradient(#a9a9a9 0%,#9a9a9a 40%,#6e6e6e 100%);border-radius:5px;box-shadow:inset 0 1px 0 rgba(255,255,255,0.18);"></div>
<div class="a" style="left:1078.0px;top:938px;width:49.9px;height:15.3px;background:#00ffff;border-radius:5px;box-shadow:inset 1px 1px 1.5px rgba(0,0,0,0.35);"></div>
<div class="t" style="left:1086.17px;top:961.47px;font-size:12.2px;color:#282828;font-weight:bold;transform:scaleX(1.0450);">100%</div>
<div class="t" style="left:1086.46px;top:976.37px;font-size:12.2px;color:#282828;font-weight:bold;transform:scaleX(1.0450);">Cyan</div>
<div class="a" style="left:1136.7px;top:931.6px;width:62.3px;height:60.4px;background:linear-gradient(#a9a9a9 0%,#9a9a9a 40%,#6e6e6e 100%);border-radius:5px;box-shadow:inset 0 1px 0 rgba(255,255,255,0.18);"></div>
<div class="a" style="left:1143.0px;top:938px;width:49.9px;height:15.3px;background:#ff00ff;border-radius:5px;box-shadow:inset 1px 1px 1.5px rgba(0,0,0,0.35);"></div>
<div class="t" style="left:1141.44px;top:961.47px;font-size:12.2px;color:#282828;font-weight:bold;transform:scaleX(1.0450);">100%</div>
<div class="t" style="left:1141.37px;top:976.37px;font-size:12.2px;color:#282828;font-weight:bold;transform:scaleX(1.0450);">Magenta</div>
<div class="a" style="left:1201.7px;top:931.6px;width:62.3px;height:60.4px;background:linear-gradient(#2e2e2e,#262626);border-radius:5px;box-shadow:inset 0 1px 0 rgba(255,255,255,0.18);"></div>
<div class="a" style="left:1208.0px;top:938px;width:49.9px;height:15.3px;background:#ffff00;border-radius:5px;box-shadow:inset 1px 1px 1.5px rgba(0,0,0,0.35);"></div>
<div class="t" style="left:1212.16px;top:961.47px;font-size:12.2px;color:#ffffff;font-weight:bold;transform:scaleX(1.0450);">100%</div>
<div class="t" style="left:1212.73px;top:976.37px;font-size:12.2px;color:#ffffff;font-weight:bold;transform:scaleX(1.0450);">Yellow</div>
<div class="a" style="left:0px;top:992px;width:1264px;height:16px;background:#626262;"></div>
<div class="a" style="left:1.7px;top:993px;width:12.5px;height:14px;background:#7a7a7a;border-radius:2px;"></div>
<div class="a" style="left:4.5px;top:995.5px;width:0;height:0;border-top:4.5px solid transparent;border-bottom:4.5px solid transparent;border-right:5.5px solid #3a3a3a;"></div>
<div class="a" style="left:450.5px;top:994px;width:795px;height:12px;background:#3c3c3c;border-radius:6px;"></div>
<div class="a" style="left:1248px;top:993px;width:14px;height:14px;background:#7a7a7a;border-radius:2px;"></div>
<div class="a" style="left:1253px;top:995.5px;width:0;height:0;border-top:4.5px solid transparent;border-bottom:4.5px solid transparent;border-left:5.5px solid #3a3a3a;"></div>
<div class="a" style="left:1264px;top:928px;width:404px;height:80px;background:#2a2a2a;"></div>
<div class="a" style="left:1265.4px;top:931px;width:59.4px;height:23.2px;background:linear-gradient(#a8a8a8 0%,#8e8e8e 45%,#6a6a6a 100%);border-radius:5px 5px 0 0;"></div>
<div class="a" style="left:1265.4px;top:955.5px;width:59.4px;height:53px;background:linear-gradient(#a8a8a8 0%,#8e8e8e 45%,#6a6a6a 100%);border-radius:0;"></div>
<div class="a" style="left:1286.5px;top:933.5px;width:18px;height:18px;border-radius:50%;background:linear-gradient(#848484,#a4a4a4);"></div>
<div class="a" style="left:1290px;top:938.5px;width:0;height:0;border-left:5.5px solid transparent;border-right:5.5px solid transparent;border-bottom:6px solid #333;"></div>
<div class="a" style="left:1275.2px;top:962px;width:39px;height:38px;border:3px solid #111;border-radius:5px;box-sizing:border-box;background:linear-gradient(#b8b8b8,#999 50%,#7a7a7a);"></div>
<div class="a" style="left:1286.4px;top:972.6px;width:17.6px;height:17.2px;background:#000;"></div>
<div class="a" style="left:1326px;top:931px;width:57.5px;height:38px;background:linear-gradient(#a8a8a8 0%,#8e8e8e 45%,#6a6a6a 100%);"></div>
<div class="a" style="left:1342.2px;top:937.3px;width:25.0px;height:25.0px;border-radius:50%;background:linear-gradient(#848484,#a4a4a4);"></div>
<div class="a" style="left:1384.8px;top:931px;width:55.0px;height:38px;background:linear-gradient(#a8a8a8 0%,#8e8e8e 45%,#6a6a6a 100%);"></div>
<div class="a" style="left:1399.8px;top:937.3px;width:25.0px;height:25.0px;border-radius:50%;background:linear-gradient(#848484,#a4a4a4);"></div>
<div class="a" style="left:1441px;top:931px;width:55px;height:38px;background:linear-gradient(#a8a8a8 0%,#8e8e8e 45%,#6a6a6a 100%);"></div>
<div class="a" style="left:1456.0px;top:937.3px;width:25.0px;height:25.0px;border-radius:50%;background:linear-gradient(#848484,#a4a4a4);"></div>
<div class="a" style="left:1497.8px;top:931px;width:55.0px;height:38px;background:linear-gradient(#a8a8a8 0%,#8e8e8e 45%,#6a6a6a 100%);"></div>
<div class="a" style="left:1512.8px;top:937.3px;width:25.0px;height:25.0px;border-radius:50%;background:linear-gradient(#848484,#a4a4a4);"></div>
<div class="a" style="left:1553.5px;top:931px;width:55.799999999999955px;height:38px;background:linear-gradient(#3a3a3a,#2c2c2c);"></div>
<div class="a" style="left:1610.3px;top:931px;width:57.700000000000045px;height:38px;background:linear-gradient(#a8a8a8 0%,#8e8e8e 45%,#6a6a6a 100%);"></div>
<div class="a" style="left:1626.0px;top:937.3px;width:25.0px;height:25.0px;border-radius:50%;background:linear-gradient(#848484,#a4a4a4);"></div>
<div class="a" style="left:1351px;top:945.5px;width:9px;height:9px;background:#333;"></div>
<div class="a" style="left:1409px;top:944px;width:0;height:0;border-top:6px solid transparent;border-bottom:6px solid transparent;border-left:10px solid #333;"></div>
<svg class="a" style="left:1458px;top:941px" width="22" height="18"><path d="M5.5 2.5 H3 V15.5 H5.5 M16.5 2.5 H19 V15.5 H16.5" stroke="#333" stroke-width="2.3" fill="none"/><circle cx="8.3" cy="9" r="1.1" fill="#333"/><circle cx="11" cy="9" r="1.1" fill="#333"/><circle cx="13.7" cy="9" r="1.1" fill="#333"/></svg>
<div class="t" style="left:1515.77px;top:940.92px;font-size:19px;color:#333;font-weight:bold;transform:scaleX(1.3926);">∞</div>
<svg class="a" style="left:1568px;top:937px" width="26" height="26"><circle cx="13" cy="13" r="12.5" fill="#303030"/><path d="M7.8 12.5 A5.3 5.3 0 0 1 17.2 9.8 M18.2 13.5 A5.3 5.3 0 0 1 8.8 16.2" stroke="#1e1e1e" stroke-width="2.8" fill="none"/><path d="M14.2 7.2 L19.8 8.2 L17.6 12.6 Z M11.8 18.8 L6.2 17.8 L8.4 13.4 Z" fill="#1e1e1e"/></svg>
<div class="a" style="left:1326px;top:970.1px;width:170px;height:38px;background:linear-gradient(#a8a8a8 0%,#8e8e8e 45%,#6a6a6a 100%);"></div>
<div class="a" style="left:1497.8px;top:970.1px;width:170.2px;height:38px;background:linear-gradient(#a8a8a8 0%,#8e8e8e 45%,#6a6a6a 100%);"></div>
<div class="a" style="left:1353.2px;top:977.2px;width:24px;height:24px;border-radius:50%;background:linear-gradient(#848484,#a4a4a4);"></div>
<div class="a" style="left:1619.3px;top:977.2px;width:24px;height:24px;border-radius:50%;background:linear-gradient(#848484,#a4a4a4);"></div>
<div class="t" style="left:1359.62px;top:979.07px;font-size:20px;color:#333;font-weight:bold;">«</div>
<div class="t" style="left:1625.72px;top:979.07px;font-size:20px;color:#333;font-weight:bold;">»</div>
<div class="t" style="left:1397.18px;top:975.78px;font-size:27.2px;color:#333333;font-weight:bold;transform:scaleX(0.9930);">Back</div>
<div class="t" style="left:1529.90px;top:975.78px;font-size:27.2px;color:#333333;font-weight:bold;transform:scaleX(1.1448);">Next</div>
<div class="a" style="left:1665px;top:40px;width:3px;height:968px;background:linear-gradient(90deg,#1c1c1c,#0c0c0c);"></div>
</body></html>
